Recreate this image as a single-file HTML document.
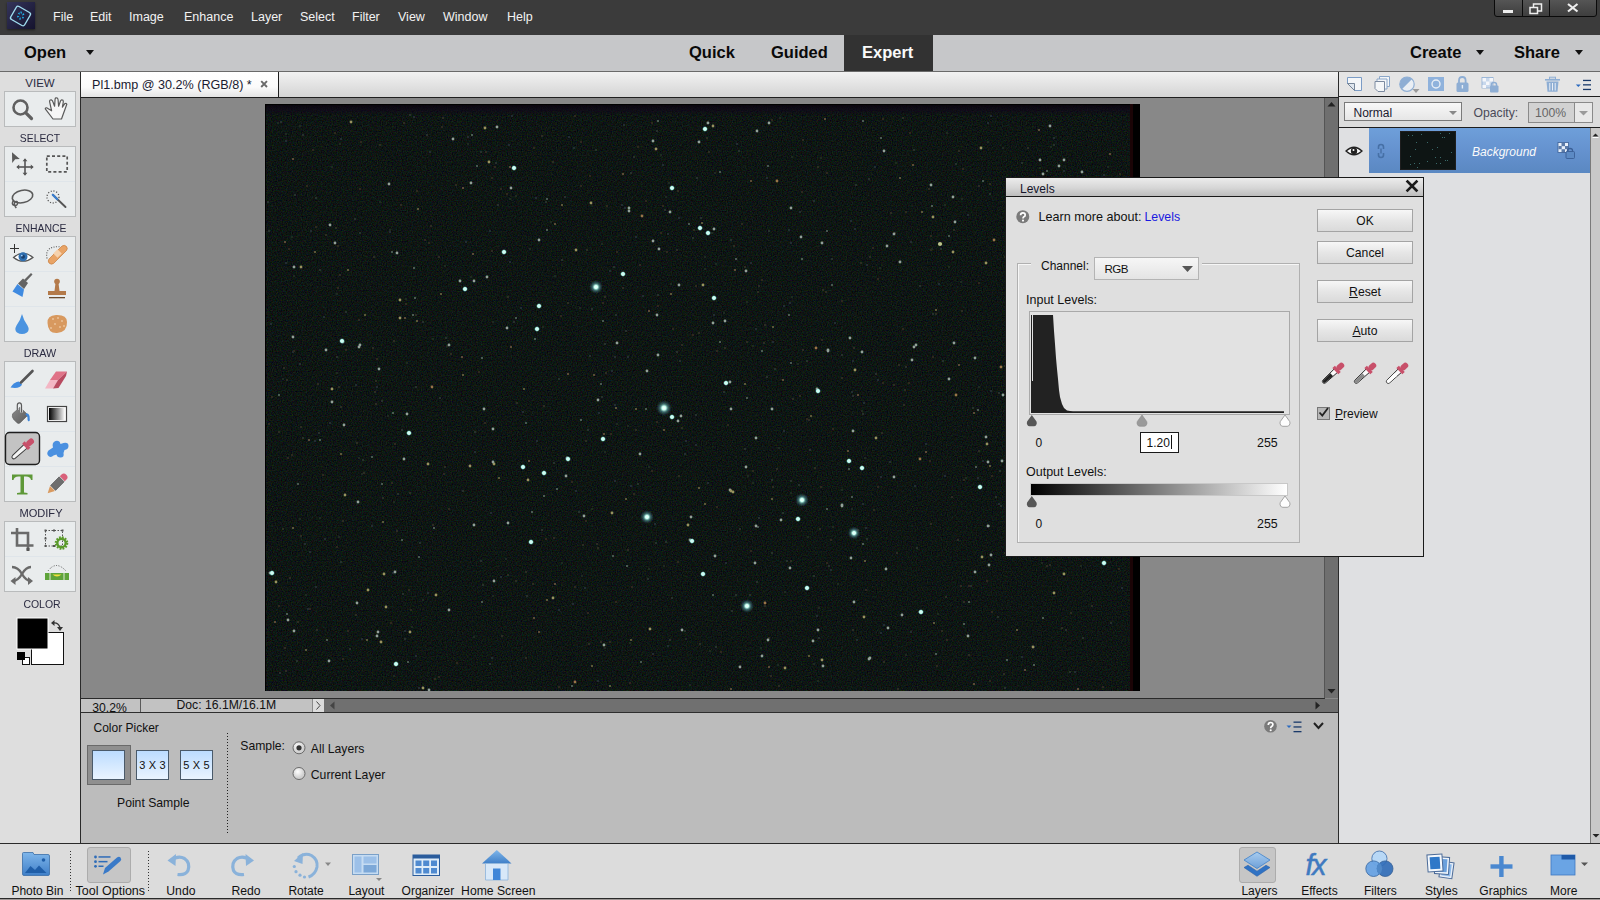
<!DOCTYPE html>
<html><head><meta charset="utf-8">
<style>
*{box-sizing:border-box;margin:0;padding:0}
html,body{width:1600px;height:900px;overflow:hidden;background:#888;font-family:"Liberation Sans",sans-serif;color:#111}
.a{position:absolute}
.t{position:absolute;white-space:nowrap;line-height:1}
svg{position:absolute;overflow:visible}
#menubar{left:0;top:0;width:1600px;height:35px;background:#3b3b3b}
.mi{position:absolute;top:11px;color:#f2f2f2;font-size:12.5px;line-height:1}
#modebar{left:0;top:35px;width:1600px;height:37px;background:#c6c7c9;border-bottom:1px solid #6a6a6a}
.mb{position:absolute;top:9px;font-size:16.5px;font-weight:bold;color:#0a0a0a;line-height:1}
.tl{position:absolute;left:0;width:80px;text-align:center;font-size:11.5px;color:#2a2a40;line-height:1}
.tbx{position:absolute;left:4px;width:72px;background:#e9eced;border:1px solid #b9bbbc}
#tabbar{left:81px;top:72px;width:1257px;height:26px;background:linear-gradient(#f2f2f2,#d4d4d4);border-bottom:1px solid #1e1e1e}
#tab{left:81px;top:72px;width:198px;height:25px;background:linear-gradient(#ffffff 0%,#fbfbfb 60%,#e4e4e4 100%);border-right:1px solid #1e1e1e}
#canvas{left:81px;top:98px;width:1244px;height:601px;background:#888888;border-bottom:1px solid #333}
#vscroll{left:1324px;top:98px;width:14px;height:600px;background:#6f6f6f;border-left:1px solid #555}
#status{left:81px;top:699px;width:1257px;height:14px;background:#707070;border-bottom:1px solid #555}
#options{left:81px;top:713px;width:1257px;height:130px;background:#bcbcbc}
#rpanel{left:1338px;top:72px;width:262px;height:771px;background:#dfe0e2;border-left:1px solid #4a4a4a}
#taskbar{left:0;top:843px;width:1600px;height:57px;background:#dcdcdc;border-top:1px solid #6a6a6a}
.tk{position:absolute;top:885px;font-size:12px;line-height:1;color:#111;white-space:nowrap}
#img{left:265px;top:104px;width:875px;height:587px;background:#000}
#dlg{left:1005px;top:177px;width:419px;height:380px;background:#dfdfdf;border:1px solid #1a1a1a}
</style></head><body>
<div id="menubar" class="a">
 <div class="a" style="left:7px;top:2px;width:28px;height:27px;background:linear-gradient(135deg,#34345a,#15132e);box-shadow:0 1px 2px rgba(0,0,0,.5)"></div>
 <svg width="28" height="27" style="left:7px;top:2px">
  <rect x="5.5" y="6.5" width="16" height="15" rx="2" fill="none" stroke="#9fdcef" stroke-width="1.4" transform="rotate(30 13.5 14)"/>
  <g fill="#1fb8f0"><path d="M13.2 9.5 L15 9.8 L14.2 12.5 Z"/><path d="M16.2 11 L17.5 12.8 L15 13.5 Z"/><path d="M17 15 L16 17 L14.8 14.8 Z"/><path d="M14 17.5 L12 17.5 L13.2 15 Z"/><path d="M10.5 15.8 L10 13.8 L12.5 14.3 Z"/><path d="M10.8 11.5 L12.5 10.2 L12.8 12.8 Z"/></g>
 </svg>
 <div class="a" style="left:1494px;top:-1px;width:103px;height:18px;border:1px solid #0a0a0a;border-radius:0 0 3px 3px;background:linear-gradient(#555,#3e3e3e)"></div>
 <div class="a" style="left:1522px;top:0;width:1px;height:17px;background:#0a0a0a"></div>
 <div class="a" style="left:1549px;top:0;width:1px;height:17px;background:#0a0a0a"></div>
 <div class="a" style="left:1503px;top:10px;width:10px;height:3px;background:#eee"></div>
 <svg width="14" height="12" style="left:1529px;top:3px"><rect x="4.5" y="1" width="8" height="7" fill="none" stroke="#eee" stroke-width="1.5"/><rect x="1" y="4.5" width="7.5" height="6" fill="#454545" stroke="#eee" stroke-width="1.5"/></svg>
 <svg width="12" height="10" style="left:1567px;top:3px"><path d="M1 1 L10.5 8.5 M10.5 1 L1 8.5" stroke="#eee" stroke-width="2.2"/></svg>
 <span class="mi" style="left:53px">File</span>
 <span class="mi" style="left:90px">Edit</span>
 <span class="mi" style="left:129px">Image</span>
 <span class="mi" style="left:184px">Enhance</span>
 <span class="mi" style="left:251px">Layer</span>
 <span class="mi" style="left:300px">Select</span>
 <span class="mi" style="left:352px">Filter</span>
 <span class="mi" style="left:398px">View</span>
 <span class="mi" style="left:443px">Window</span>
 <span class="mi" style="left:507px">Help</span>
</div>
<div id="modebar" class="a">
 <span class="mb" style="left:24px">Open</span>
 <div class="a" style="left:86px;top:15px;width:0;height:0;border-left:4px solid transparent;border-right:4px solid transparent;border-top:5px solid #111"></div>
 <span class="mb" style="left:689px">Quick</span>
 <span class="mb" style="left:771px">Guided</span>
 <div class="a" style="left:844px;top:0;width:89px;height:36px;background:#323232"></div>
 <span class="mb" style="left:862px;color:#fafafa">Expert</span>
 <span class="mb" style="left:1410px">Create</span>
 <div class="a" style="left:1476px;top:15px;width:0;height:0;border-left:4px solid transparent;border-right:4px solid transparent;border-top:5px solid #111"></div>
 <span class="mb" style="left:1514px">Share</span>
 <div class="a" style="left:1575px;top:15px;width:0;height:0;border-left:4px solid transparent;border-right:4px solid transparent;border-top:5px solid #111"></div>
</div>
<div id="tabbar" class="a"></div>
<div id="tab" class="a"></div>
<span class="t" style="left:92px;top:79px;font-size:12.6px;color:#1a1a30">Pl1.bmp @ 30.2% (RGB/8) *</span>
<svg width="9" height="9" style="left:260px;top:80px"><path d="M1.2 1.2 L7 7 M7 1.2 L1.2 7" stroke="#6a6a6a" stroke-width="1.9"/></svg>
<div id="canvas" class="a"></div>
<div id="vscroll" class="a"></div>
<div id="status" class="a"></div>
<div id="options" class="a"></div>
<div id="rpanel" class="a"></div>
<div id="taskbar" class="a"></div>
<div class="a" style="left:0;top:72px;width:80px;height:771px;background:#dedede"></div>
<div class="a" style="left:80px;top:72px;width:1px;height:771px;background:#2a2a2a"></div>
<span class="tl" style="top:78px">VIEW</span>
<span class="tl" style="top:133px;transform:scaleX(0.9)">SELECT</span>
<span class="tl" style="top:222.5px;left:0.5px;transform:scaleX(0.907)">ENHANCE</span>
<span class="tl" style="top:347.5px;transform:scaleX(0.94)">DRAW</span>
<span class="tl" style="top:507.5px;left:1px;transform:scaleX(0.964)">MODIFY</span>
<span class="tl" style="top:598.5px;left:2px;transform:scaleX(0.91)">COLOR</span>
<div class="tbx" style="top:91px;height:36px"></div>
<div class="tbx" style="top:146px;height:71px"></div>
<div class="tbx" style="top:236px;height:106px"></div>
<div class="tbx" style="top:361px;height:141px"></div>
<div class="tbx" style="top:521px;height:71px"></div>
<svg width="81" height="843" style="left:0;top:0">
 <g stroke="#dfe5ea" stroke-width="1">
  <line x1="5" y1="181.5" x2="75" y2="181.5"/>
  <line x1="5" y1="271.5" x2="75" y2="271.5"/><line x1="5" y1="306.5" x2="75" y2="306.5"/>
  <line x1="5" y1="396.5" x2="75" y2="396.5"/><line x1="5" y1="431.5" x2="75" y2="431.5"/><line x1="5" y1="466.5" x2="75" y2="466.5"/>
  <line x1="5" y1="556.5" x2="75" y2="556.5"/>
 </g>
 <!-- zoom -->
 <circle cx="20.5" cy="107.5" r="7" fill="none" stroke="#606060" stroke-width="2.6"/>
 <line x1="25.8" y1="112.8" x2="31.5" y2="118.5" stroke="#606060" stroke-width="3.2" stroke-linecap="round"/>
 <!-- hand -->
 <path d="M53 119 L45.5 109.2 Q44.8 107.6 46.6 107.8 L51.6 110.8 L49.6 101.6 Q49.6 99.6 51.3 99.9 Q52.5 100.3 53 102 L54.6 106.2 L55.1 99 Q55.6 97.3 57.2 98 Q58 98.6 58.1 100 L58.6 106.2 L60.6 100.8 Q61.6 99.2 63 100.2 Q63.5 101 63.2 102.5 L62.4 107.2 L64.6 103.8 Q66.2 102.6 66.8 104.3 L61.5 119 Z" fill="#f6f6f6" stroke="#5a5a5a" stroke-width="1.2" stroke-linejoin="round"/>
 <!-- move -->
 <path d="M12 152.3 L19.8 159 L15.2 159.3 L12.2 163 Z" fill="#5a5a5a"/>
 <g stroke="#555" stroke-width="1.6" fill="none"><line x1="17.5" y1="167" x2="32.5" y2="167"/><line x1="25" y1="159.5" x2="25" y2="174.5"/></g>
 <path d="M25 158.3 L22.6 161.2 L27.4 161.2 Z M25 175.7 L22.6 172.8 L27.4 172.8 Z M16.3 167 L19.2 164.6 L19.2 169.4 Z M33.7 167 L30.8 164.6 L30.8 169.4 Z" fill="#555"/>
 <!-- marquee -->
 <rect x="46.8" y="156.2" width="20.4" height="15.6" fill="none" stroke="#555" stroke-width="1.7" stroke-dasharray="3 2.2"/>
 <!-- lasso -->
 <ellipse cx="22.5" cy="196.5" rx="10.4" ry="6.2" fill="none" stroke="#5a5a5a" stroke-width="1.6" transform="rotate(-12 22.5 196.5)"/>
 <path d="M13.5 200.5 Q11 204.5 14 205.3 Q17.5 206 17.6 203 Q17.3 200.6 14.8 202 Q13.5 204.5 16.3 208" fill="none" stroke="#5a5a5a" stroke-width="1.5"/>
 <!-- magic wand -->
 <circle cx="53" cy="197" r="6" fill="none" stroke="#555" stroke-width="1.3" stroke-dasharray="1.1 1.7"/>
 <line x1="52.8" y1="194.8" x2="65.5" y2="207" stroke="#555" stroke-width="1.9" stroke-linecap="round"/>
 <line x1="52.8" y1="194.8" x2="57.2" y2="199.2" stroke="#3a7fd0" stroke-width="2.1" stroke-linecap="round"/>
 <!-- red eye -->
 <g stroke="#333" stroke-width="1"><line x1="10" y1="248.5" x2="19" y2="248.5"/><line x1="14.5" y1="244" x2="14.5" y2="253"/></g>
 <path d="M13.5 257.5 Q23 249 33 257.5 Q23 265 13.5 257.5 Z" fill="#fff" stroke="#555" stroke-width="1.2"/>
 <circle cx="23" cy="256.8" r="4.5" fill="#2f6fb0"/><circle cx="23" cy="256.8" r="2" fill="#1b3f6b"/><circle cx="21.8" cy="255.6" r="0.9" fill="#9fd0ff"/>
 <!-- healing -->
 <path d="M47 258.5 Q44.5 246 59.5 246.8" fill="none" stroke="#555" stroke-width="1.1" stroke-dasharray="1 1.5"/>
 <path d="M49 259 L62 246 Q64.5 244.5 66.5 246.5 Q68 248.5 66.5 250.5 L53.5 263.5 Q51 265 49 263 Q47.5 261 49 259 Z" fill="#e9a466" stroke="#c57c3e" stroke-width="0.7"/>
 <rect x="54.5" y="250.5" width="6" height="6" fill="#f6d2ad" transform="rotate(-45 57.5 253.5)"/>
 <!-- smart brush -->
 <path d="M12.5 291.5 L17.5 284 L24 289.5 L22.5 297 Z" fill="#3f8ae0"/>
 <path d="M18 283.5 L23 278.5 L28 283 L24 289 Z" fill="#636363"/>
 <path d="M24 280 L31 273 L32.5 274.5 L26 281.5 Z" fill="#636363"/>
 <!-- clone stamp -->
 <circle cx="57" cy="281.5" r="2.8" fill="#b47a4a"/>
 <path d="M55.5 283 L58.5 283 L59.5 291 L54.5 291 Z" fill="#b47a4a"/>
 <rect x="48" y="291" width="18" height="4" fill="#b47a4a"/>
 <rect x="49" y="297" width="16" height="1.3" fill="#6b4a2e"/>
 <!-- blur drop -->
 <path d="M22 314 Q23.5 320 27.5 325.5 Q30 330 27 332.5 Q22 335.5 17 332.5 Q14 330 16.5 325.5 Q20.5 320 22 314 Z" fill="#4a93e0"/>
 <!-- sponge -->
 <path d="M47.5 323 Q47 315.5 56 315 Q67 314.5 67 322 Q67.5 332 57 333 Q48 333.5 47.5 323 Z" fill="#d8995f"/>
 <g fill="#f7e0c5"><circle cx="53" cy="319" r="0.8"/><circle cx="58" cy="318" r="0.8"/><circle cx="62" cy="321" r="0.8"/><circle cx="55" cy="324" r="0.8"/><circle cx="60" cy="327" r="0.8"/><circle cx="51" cy="328" r="0.8"/><circle cx="64" cy="326" r="0.8"/></g>
 <!-- brush -->
 <path d="M10.5 387.5 Q14 382 19 381.5 L22 384.5 Q20 389 10.5 387.5 Z" fill="#3f8ae0"/>
 <line x1="21" y1="382.5" x2="32.5" y2="371" stroke="#555" stroke-width="2.6" stroke-linecap="round"/>
 <!-- eraser -->
 <path d="M45 388.5 L50 380 L58 380 L53 388.5 Z" fill="#f3b6c4"/>
 <path d="M50 380 L56 371.5 L67 371.5 L58 380 Z" fill="#e07388"/>
 <path d="M58 380 L67 371.5 L66 376 L58.5 388 L53 388.5 Z" fill="#b84a60"/>
 <!-- bucket -->
 <defs><linearGradient id="bk" x1="0" y1="0" x2="1" y2="1"><stop offset="0" stop-color="#8a8a8a"/><stop offset="1" stop-color="#5a5a5a"/></linearGradient></defs>
 <path d="M12.6 413.8 Q11.6 416.8 13.6 419.3 L17 422.8 Q18.6 424.2 20.2 422.8 L28 415 L20 407.2 Z" fill="url(#bk)" stroke="#555" stroke-width="0.6"/>
 <path d="M17.3 410 L17.3 405.2 Q17.5 402.9 19.4 402.9 Q21.3 402.9 21.5 405.2 L21.5 412.5" fill="none" stroke="#e9eced" stroke-width="2.6"/>
 <path d="M17.3 410 L17.3 405.2 Q17.5 402.9 19.4 402.9 Q21.3 402.9 21.5 405.2 L21.5 412.5" fill="none" stroke="#5a5a5a" stroke-width="1.2"/>
 <path d="M26.2 413.2 Q28.8 413 29.6 416.5 L29.8 420 Q29.6 421.7 28.3 421.2 Q27.2 420.4 27.5 417.4 Q27.2 415.3 25.4 414.8 Z" fill="#3f86d8"/>
 <!-- gradient -->
 <defs><linearGradient id="gr" x1="0" x2="1"><stop offset="0" stop-color="#000"/><stop offset="1" stop-color="#fff"/></linearGradient></defs>
 <rect x="47.5" y="406.5" width="19" height="15" fill="#fff" stroke="#444" stroke-width="1.2"/>
 <rect x="49" y="408" width="16" height="12" fill="url(#gr)"/>
 <!-- eyedropper selected -->
 <rect x="5.5" y="432.5" width="34" height="32" rx="4" fill="#c3c3c3" stroke="#1e1e1e" stroke-width="1.4"/>
 <g transform="translate(26.5 445.5) rotate(-42)">
  <path d="M-19 0 Q-19 -1.7 -17 -1.9 L0 -2.4 L0 2.4 L-17 1.9 Q-19 1.7 -19 0 Z" fill="#f4f4f4" stroke="#3a3a3a" stroke-width="1"/>
  <rect x="-2" y="-4.3" width="3.4" height="8.6" fill="#c8506a"/>
  <rect x="0.8" y="-2.9" width="8.2" height="5.8" rx="2.7" fill="#c8506a"/>
 </g>
 <!-- smudge splat -->
 <path d="M48.5 456 Q46 453.5 48.5 450.5 L53 447.5 Q51.5 442.5 55.5 441 Q59.5 440 60.5 444 L63.5 443 Q68.5 442 68.5 446 Q68.5 449.5 64.5 450 L63.5 453 Q64.5 457.5 60.5 457.5 Q57 457.5 56.5 454.5 L53.5 455.5 Q51 458 48.5 456 Z" fill="#4a90e0"/>
 <!-- T -->
 <path d="M12 474.5 L32.5 474.5 L32.5 480 L31 480 Q30.5 476.5 26 476.5 L24 476.5 L24 492.5 L27.5 493 L27.5 494.5 L17 494.5 L17 493 L20.5 492.5 L20.5 476.5 L18.5 476.5 Q14 476.5 13.5 480 L12 480 Z" fill="#5e9838"/>
 <!-- pencil -->
 <g transform="translate(56.6 484.4) rotate(-45) scale(1.1)">
  <rect x="-4.5" y="-3.2" width="11" height="6.4" fill="#6e6e6e" stroke="#4a4a4a" stroke-width="0.5"/>
  <path d="M7.3 -3.2 L9.5 -3.2 Q12.5 -3.2 12.5 0 Q12.5 3.2 9.5 3.2 L7.3 3.2 Z" fill="#d9607a"/>
  <path d="M-5.3 -3.2 L-5.3 3.2 L-11.5 0 Z" fill="#d99a60"/>
 </g>
 <!-- crop -->
 <g fill="none" stroke="#6a6a6a" stroke-width="2.6"><path d="M17 528 L17 545.5 L33.5 545.5"/><path d="M11 533 L28 533 L28 550"/></g>
 <rect x="26.5" y="548" width="3" height="3" fill="#555"/>
 <!-- recompose -->
 <rect x="45.5" y="530.5" width="17" height="15.5" fill="none" stroke="#555" stroke-width="1" stroke-dasharray="1.5 1.5"/>
 <g fill="#555"><rect x="44.5" y="529.5" width="2" height="2"/><rect x="53" y="529.5" width="2" height="2"/><rect x="61.5" y="529.5" width="2" height="2"/><rect x="44.5" y="537.5" width="2" height="2"/><rect x="44.5" y="545" width="2" height="2"/><rect x="53" y="545" width="2" height="2"/></g>
 <circle cx="61.5" cy="543" r="5.2" fill="none" stroke="#5a9a2a" stroke-width="3.2" stroke-dasharray="1.6 1.1"/>
 <circle cx="61.5" cy="543" r="4.2" fill="none" stroke="#5a9a2a" stroke-width="2.4"/>
 <!-- content move -->
 <g fill="none" stroke="#6a6a6a" stroke-width="2.4"><path d="M12 567 Q18 567 22 574 Q26 581 31 581"/><path d="M31 567 Q26 567 22 574 Q18 581 12.5 581"/></g>
 <path d="M10.5 581 L15.5 577 L15.5 585 Z M33 581 L28 577 L28 585 Z" fill="#6a6a6a"/>
 <!-- straighten -->
 <path d="M48 571 Q56 560 66 571" fill="none" stroke="#333" stroke-width="0.8" stroke-dasharray="1 1.5"/>
 <rect x="45" y="573" width="24" height="7" fill="#5ea33a"/>
 <rect x="49.5" y="573" width="1" height="7" fill="#dfe8d8"/><rect x="63.5" y="573" width="1" height="7" fill="#dfe8d8"/>
 <path d="M52.5 574.5 Q57 578.5 61.5 574.5 Z" fill="#f2e03a"/>
 <!-- color swatches -->
 <rect x="31.5" y="632.5" width="32" height="32" fill="#fff" stroke="#111" stroke-width="1"/>
 <rect x="17" y="618" width="31" height="31" fill="#000" stroke="#fff" stroke-width="1"/>
 <rect x="22.5" y="657.5" width="7" height="7" fill="#fff" stroke="#111" stroke-width="1"/>
 <rect x="17" y="652" width="8" height="8" fill="#000"/>
 <path d="M53 623 Q58 622 60 627.5" fill="none" stroke="#333" stroke-width="1.3"/>
 <path d="M51 623 L54.5 620 L54.5 626 Z M60 631 L57 627 L63 627 Z" fill="#333"/>
</svg>
<svg width="875" height="587" style="left:265px;top:104px">
<defs><radialGradient id="glow"><stop offset="0" stop-color="#ffffff"/><stop offset="0.25" stop-color="#c8fff0"/><stop offset="0.5" stop-color="#5fa8a8" stop-opacity="0.6"/><stop offset="1" stop-color="#2a4a6a" stop-opacity="0"/></radialGradient>
<radialGradient id="mid"><stop offset="0" stop-color="#f4fffb"/><stop offset="0.55" stop-color="#aef0e4"/><stop offset="1" stop-color="#3a7070" stop-opacity="0"/></radialGradient></defs>
<rect width="875" height="587" fill="#000"/>
<filter id="nz" x="0" y="0" width="100%" height="100%" color-interpolation-filters="sRGB"><feTurbulence type="fractalNoise" baseFrequency="0.8" numOctaves="2" seed="5"/><feColorMatrix type="matrix" values="0.22 0 0 0 -0.055  0 0.26 0 0 -0.045  0 0 0.24 0 -0.045  0 0 0 0 1"/></filter>
<rect x="0" y="0" width="865" height="587" fill="#0e1613"/>
<rect x="0" y="0" width="865" height="587" filter="url(#nz)"/>
<linearGradient id="band" x1="0" y1="0" x2="0" y2="1"><stop offset="0" stop-color="#08020a" stop-opacity="0.9"/><stop offset="0.6" stop-color="#10061a" stop-opacity="0.55"/><stop offset="1" stop-color="#10061a" stop-opacity="0"/></linearGradient>
<rect x="0" y="0" width="865" height="11" fill="url(#band)"/>
<rect x="0" y="0" width="875" height="1" fill="#000"/>
<rect x="0" y="0" width="1" height="587" fill="#000"/>
<rect x="865" y="0" width="3" height="587" fill="#1a0406"/>
<rect x="280" y="97" width="2" height="2" fill="#26302c"/>
<rect x="64" y="318" width="2" height="2" fill="#222c32"/>
<rect x="503" y="533" width="2" height="2" fill="#2c2c22"/>
<rect x="34" y="259" width="2" height="2" fill="#26302c"/>
<rect x="209" y="327" width="2" height="2" fill="#26302c"/>
<rect x="713" y="81" width="2" height="2" fill="#2c2c22"/>
<rect x="544" y="345" width="2" height="2" fill="#26302c"/>
<rect x="498" y="238" width="2" height="2" fill="#2c2c22"/>
<rect x="42" y="504" width="2" height="2" fill="#222c32"/>
<rect x="362" y="321" width="2" height="2" fill="#1e2a20"/>
<rect x="267" y="479" width="2" height="2" fill="#2c2c22"/>
<rect x="91" y="338" width="2" height="2" fill="#2c2c22"/>
<rect x="322" y="325" width="2" height="2" fill="#26302c"/>
<rect x="487" y="366" width="2" height="2" fill="#2e281e"/>
<rect x="587" y="256" width="2" height="2" fill="#222c32"/>
<rect x="402" y="541" width="2" height="2" fill="#222c32"/>
<rect x="260" y="467" width="2" height="2" fill="#2c2c22"/>
<rect x="72" y="183" width="2" height="2" fill="#2e281e"/>
<rect x="755" y="429" width="2" height="2" fill="#222c32"/>
<rect x="526" y="52" width="2" height="2" fill="#1e2a20"/>
<rect x="362" y="445" width="2" height="2" fill="#2c2c22"/>
<rect x="805" y="252" width="2" height="2" fill="#26302c"/>
<rect x="660" y="339" width="2" height="2" fill="#222c32"/>
<rect x="295" y="211" width="2" height="2" fill="#2e281e"/>
<rect x="501" y="272" width="2" height="2" fill="#26302c"/>
<rect x="814" y="283" width="2" height="2" fill="#26302c"/>
<rect x="54" y="413" width="2" height="2" fill="#1e2a20"/>
<rect x="856" y="483" width="2" height="2" fill="#222c32"/>
<rect x="618" y="520" width="2" height="2" fill="#222c32"/>
<rect x="21" y="275" width="2" height="2" fill="#2c2c22"/>
<rect x="527" y="294" width="2" height="2" fill="#2c2c22"/>
<rect x="663" y="84" width="2" height="2" fill="#2c2c22"/>
<rect x="344" y="537" width="2" height="2" fill="#2e281e"/>
<rect x="71" y="268" width="2" height="2" fill="#1e2a20"/>
<rect x="241" y="89" width="2" height="2" fill="#2e281e"/>
<rect x="745" y="170" width="2" height="2" fill="#2e281e"/>
<rect x="850" y="403" width="2" height="2" fill="#2e281e"/>
<rect x="826" y="97" width="2" height="2" fill="#2c2c22"/>
<rect x="132" y="389" width="2" height="2" fill="#26302c"/>
<rect x="419" y="349" width="2" height="2" fill="#222c32"/>
<rect x="244" y="94" width="2" height="2" fill="#1e2a20"/>
<rect x="320" y="336" width="2" height="2" fill="#2c2c22"/>
<rect x="596" y="306" width="2" height="2" fill="#1e2a20"/>
<rect x="565" y="435" width="2" height="2" fill="#2e281e"/>
<rect x="776" y="458" width="2" height="2" fill="#1e2a20"/>
<rect x="339" y="239" width="2" height="2" fill="#26302c"/>
<rect x="416" y="240" width="2" height="2" fill="#2c2c22"/>
<rect x="60" y="130" width="2" height="2" fill="#2c2c22"/>
<rect x="97" y="355" width="2" height="2" fill="#26302c"/>
<rect x="2" y="97" width="2" height="2" fill="#26302c"/>
<rect x="818" y="363" width="2" height="2" fill="#26302c"/>
<rect x="754" y="363" width="2" height="2" fill="#2c2c22"/>
<rect x="548" y="559" width="2" height="2" fill="#1e2a20"/>
<rect x="315" y="81" width="2" height="2" fill="#2e281e"/>
<rect x="856" y="278" width="2" height="2" fill="#2e281e"/>
<rect x="270" y="93" width="2" height="2" fill="#222c32"/>
<rect x="639" y="285" width="2" height="2" fill="#2c2c22"/>
<rect x="446" y="128" width="2" height="2" fill="#1e2a20"/>
<rect x="313" y="407" width="2" height="2" fill="#26302c"/>
<rect x="654" y="181" width="2" height="2" fill="#26302c"/>
<rect x="601" y="160" width="2" height="2" fill="#222c32"/>
<rect x="783" y="215" width="2" height="2" fill="#2c2c22"/>
<rect x="460" y="458" width="2" height="2" fill="#222c32"/>
<rect x="549" y="363" width="2" height="2" fill="#2c2c22"/>
<rect x="695" y="481" width="2" height="2" fill="#2c2c22"/>
<rect x="174" y="293" width="2" height="2" fill="#26302c"/>
<rect x="853" y="464" width="2" height="2" fill="#2e281e"/>
<rect x="225" y="408" width="2" height="2" fill="#222c32"/>
<rect x="387" y="549" width="2" height="2" fill="#222c32"/>
<rect x="823" y="220" width="2" height="2" fill="#2c2c22"/>
<rect x="90" y="280" width="2" height="2" fill="#222c32"/>
<rect x="178" y="369" width="2" height="2" fill="#1e2a20"/>
<rect x="725" y="286" width="2" height="2" fill="#222c32"/>
<rect x="690" y="59" width="2" height="2" fill="#26302c"/>
<rect x="784" y="460" width="2" height="2" fill="#2c2c22"/>
<rect x="413" y="113" width="2" height="2" fill="#222c32"/>
<rect x="77" y="554" width="2" height="2" fill="#2e281e"/>
<rect x="400" y="437" width="2" height="2" fill="#26302c"/>
<rect x="625" y="108" width="2" height="2" fill="#2c2c22"/>
<rect x="26" y="350" width="2" height="2" fill="#2e281e"/>
<rect x="696" y="94" width="2" height="2" fill="#1e2a20"/>
<rect x="845" y="388" width="2" height="2" fill="#222c32"/>
<rect x="136" y="325" width="2" height="2" fill="#26302c"/>
<rect x="14" y="568" width="2" height="2" fill="#26302c"/>
<rect x="455" y="547" width="2" height="2" fill="#2e281e"/>
<rect x="850" y="122" width="2" height="2" fill="#2c2c22"/>
<rect x="26" y="132" width="2" height="2" fill="#1e2a20"/>
<rect x="209" y="347" width="2" height="2" fill="#222c32"/>
<rect x="470" y="490" width="2" height="2" fill="#26302c"/>
<rect x="785" y="213" width="2" height="2" fill="#2e281e"/>
<rect x="572" y="479" width="2" height="2" fill="#1e2a20"/>
<rect x="364" y="538" width="2" height="2" fill="#1e2a20"/>
<rect x="114" y="97" width="2" height="2" fill="#1e2a20"/>
<rect x="18" y="263" width="2" height="2" fill="#2c2c22"/>
<rect x="525" y="456" width="2" height="2" fill="#2c2c22"/>
<rect x="150" y="282" width="2" height="2" fill="#26302c"/>
<rect x="481" y="197" width="2" height="2" fill="#1e2a20"/>
<rect x="458" y="287" width="2" height="2" fill="#26302c"/>
<rect x="762" y="43" width="2" height="2" fill="#2c2c22"/>
<rect x="240" y="454" width="2" height="2" fill="#1e2a20"/>
<rect x="391" y="26" width="2" height="2" fill="#26302c"/>
<rect x="383" y="362" width="2" height="2" fill="#1e2a20"/>
<rect x="523" y="125" width="2" height="2" fill="#222c32"/>
<rect x="391" y="317" width="2" height="2" fill="#2e281e"/>
<rect x="439" y="152" width="2" height="2" fill="#1e2a20"/>
<rect x="756" y="552" width="2" height="2" fill="#222c32"/>
<rect x="796" y="523" width="2" height="2" fill="#2c2c22"/>
<rect x="724" y="89" width="2" height="2" fill="#26302c"/>
<rect x="339" y="192" width="2" height="2" fill="#2c2c22"/>
<rect x="370" y="132" width="2" height="2" fill="#222c32"/>
<rect x="676" y="526" width="2" height="2" fill="#2c2c22"/>
<rect x="810" y="380" width="2" height="2" fill="#222c32"/>
<rect x="125" y="518" width="2" height="2" fill="#2e281e"/>
<rect x="191" y="558" width="2" height="2" fill="#2e281e"/>
<rect x="763" y="104" width="2" height="2" fill="#2c2c22"/>
<rect x="141" y="258" width="2" height="2" fill="#1e2a20"/>
<rect x="349" y="252" width="2" height="2" fill="#222c32"/>
<rect x="276" y="425" width="2" height="2" fill="#26302c"/>
<rect x="293" y="274" width="2" height="2" fill="#26302c"/>
<rect x="333" y="308" width="2" height="2" fill="#222c32"/>
<rect x="443" y="47" width="2" height="2" fill="#2c2c22"/>
<rect x="838" y="70" width="2" height="2" fill="#222c32"/>
<rect x="236" y="531" width="2" height="2" fill="#2c2c22"/>
<rect x="235" y="84" width="2" height="2" fill="#2e281e"/>
<rect x="733" y="399" width="2" height="2" fill="#222c32"/>
<rect x="351" y="319" width="2" height="2" fill="#1e2a20"/>
<rect x="493" y="413" width="2" height="2" fill="#26302c"/>
<rect x="242" y="470" width="2" height="2" fill="#2c2c22"/>
<rect x="368" y="52" width="2" height="2" fill="#26302c"/>
<rect x="548" y="471" width="2" height="2" fill="#26302c"/>
<rect x="525" y="138" width="2" height="2" fill="#222c32"/>
<rect x="744" y="271" width="2" height="2" fill="#222c32"/>
<rect x="857" y="250" width="2" height="2" fill="#222c32"/>
<rect x="537" y="35" width="2" height="2" fill="#2c2c22"/>
<rect x="809" y="567" width="2" height="2" fill="#222c32"/>
<rect x="45" y="126" width="2" height="2" fill="#222c32"/>
<rect x="543" y="315" width="2" height="2" fill="#2c2c22"/>
<rect x="251" y="298" width="2" height="2" fill="#2c2c22"/>
<rect x="235" y="472" width="2" height="2" fill="#222c32"/>
<rect x="34" y="21" width="2" height="2" fill="#1e2a20"/>
<rect x="476" y="119" width="2" height="2" fill="#2e281e"/>
<rect x="213" y="267" width="2" height="2" fill="#2e281e"/>
<rect x="567" y="324" width="2" height="2" fill="#2e281e"/>
<rect x="836" y="187" width="2" height="2" fill="#2c2c22"/>
<rect x="847" y="207" width="2" height="2" fill="#2c2c22"/>
<rect x="350" y="210" width="2" height="2" fill="#26302c"/>
<rect x="722" y="18" width="2" height="2" fill="#222c32"/>
<rect x="372" y="42" width="2" height="2" fill="#2e281e"/>
<rect x="751" y="396" width="2" height="2" fill="#222c32"/>
<rect x="517" y="408" width="2" height="2" fill="#26302c"/>
<rect x="397" y="101" width="2" height="2" fill="#2e281e"/>
<rect x="5" y="219" width="2" height="2" fill="#222c32"/>
<rect x="838" y="325" width="2" height="2" fill="#2c2c22"/>
<rect x="32" y="517" width="2" height="2" fill="#2c2c22"/>
<rect x="309" y="11" width="2" height="2" fill="#2e281e"/>
<rect x="74" y="170" width="2" height="2" fill="#2c2c22"/>
<rect x="215" y="456" width="2" height="2" fill="#26302c"/>
<rect x="229" y="62" width="2" height="2" fill="#2e281e"/>
<rect x="507" y="237" width="2" height="2" fill="#222c32"/>
<rect x="264" y="144" width="2" height="2" fill="#1e2a20"/>
<rect x="826" y="501" width="2" height="2" fill="#2c2c22"/>
<rect x="567" y="422" width="2" height="2" fill="#1e2a20"/>
<rect x="337" y="198" width="2" height="2" fill="#2e281e"/>
<rect x="131" y="426" width="2" height="2" fill="#2c2c22"/>
<rect x="40" y="490" width="2" height="2" fill="#1e2a20"/>
<rect x="542" y="432" width="2" height="2" fill="#1e2a20"/>
<rect x="122" y="311" width="2" height="2" fill="#1e2a20"/>
<rect x="491" y="477" width="2" height="2" fill="#26302c"/>
<rect x="713" y="346" width="2" height="2" fill="#2c2c22"/>
<rect x="75" y="34" width="2" height="2" fill="#222c32"/>
<rect x="827" y="227" width="2" height="2" fill="#2e281e"/>
<rect x="482" y="371" width="2" height="2" fill="#1e2a20"/>
<rect x="587" y="291" width="2" height="2" fill="#26302c"/>
<rect x="395" y="50" width="2" height="2" fill="#1e2a20"/>
<rect x="774" y="63" width="2" height="2" fill="#1e2a20"/>
<rect x="59" y="434" width="2" height="2" fill="#222c32"/>
<rect x="698" y="497" width="2" height="2" fill="#2c2c22"/>
<rect x="629" y="128" width="2" height="2" fill="#2e281e"/>
<rect x="427" y="230" width="2" height="2" fill="#2e281e"/>
<rect x="785" y="175" width="2" height="2" fill="#26302c"/>
<rect x="533" y="380" width="2" height="2" fill="#26302c"/>
<rect x="518" y="201" width="2" height="2" fill="#222c32"/>
<rect x="536" y="87" width="2" height="2" fill="#2e281e"/>
<rect x="54" y="165" width="2" height="2" fill="#26302c"/>
<rect x="597" y="399" width="2" height="2" fill="#222c32"/>
<rect x="612" y="174" width="2" height="2" fill="#2e281e"/>
<rect x="403" y="78" width="2" height="2" fill="#1e2a20"/>
<rect x="173" y="572" width="2" height="2" fill="#2e281e"/>
<rect x="17" y="274" width="2" height="2" fill="#1e2a20"/>
<rect x="835" y="268" width="2" height="2" fill="#222c32"/>
<rect x="335" y="537" width="2" height="2" fill="#2c2c22"/>
<rect x="66" y="62" width="2" height="2" fill="#1e2a20"/>
<rect x="227" y="217" width="2" height="2" fill="#1e2a20"/>
<rect x="707" y="303" width="2" height="2" fill="#26302c"/>
<rect x="607" y="143" width="2" height="2" fill="#2e281e"/>
<rect x="341" y="101" width="2" height="2" fill="#2e281e"/>
<rect x="588" y="243" width="2" height="2" fill="#2c2c22"/>
<rect x="360" y="226" width="2" height="2" fill="#26302c"/>
<rect x="725" y="11" width="2" height="2" fill="#222c32"/>
<rect x="724" y="79" width="2" height="2" fill="#2c2c22"/>
<rect x="615" y="528" width="2" height="2" fill="#222c32"/>
<rect x="220" y="47" width="2" height="2" fill="#2e281e"/>
<rect x="861" y="349" width="2" height="2" fill="#222c32"/>
<rect x="798" y="445" width="2" height="2" fill="#26302c"/>
<rect x="243" y="40" width="2" height="2" fill="#222c32"/>
<rect x="548" y="96" width="2" height="2" fill="#222c32"/>
<rect x="377" y="191" width="2" height="2" fill="#222c32"/>
<rect x="677" y="256" width="2" height="2" fill="#26302c"/>
<rect x="700" y="373" width="2" height="2" fill="#1e2a20"/>
<rect x="474" y="424" width="2" height="2" fill="#26302c"/>
<rect x="805" y="246" width="2" height="2" fill="#1e2a20"/>
<rect x="649" y="381" width="2" height="2" fill="#222c32"/>
<rect x="420" y="534" width="2" height="2" fill="#1e2a20"/>
<rect x="111" y="282" width="2" height="2" fill="#222c32"/>
<rect x="244" y="157" width="2" height="2" fill="#222c32"/>
<rect x="351" y="147" width="2" height="2" fill="#2e281e"/>
<rect x="481" y="237" width="2" height="2" fill="#2c2c22"/>
<rect x="555" y="53" width="2" height="2" fill="#1e2a20"/>
<rect x="781" y="296" width="2" height="2" fill="#2c2c22"/>
<rect x="392" y="201" width="2" height="2" fill="#2e281e"/>
<rect x="370" y="325" width="2" height="2" fill="#2c2c22"/>
<rect x="80" y="207" width="2" height="2" fill="#26302c"/>
<rect x="277" y="222" width="2" height="2" fill="#1e2a20"/>
<rect x="176" y="22" width="2" height="2" fill="#2e281e"/>
<rect x="331" y="439" width="2" height="2" fill="#2c2c22"/>
<rect x="326" y="204" width="2" height="2" fill="#26302c"/>
<rect x="430" y="340" width="2" height="2" fill="#222c32"/>
<rect x="110" y="299" width="2" height="2" fill="#2c2c22"/>
<rect x="82" y="526" width="2" height="2" fill="#2e281e"/>
<rect x="346" y="266" width="2" height="2" fill="#222c32"/>
<rect x="732" y="512" width="2" height="2" fill="#26302c"/>
<rect x="111" y="254" width="2" height="2" fill="#2e281e"/>
<rect x="835" y="292" width="2" height="2" fill="#26302c"/>
<rect x="339" y="543" width="2" height="2" fill="#1e2a20"/>
<rect x="738" y="569" width="2" height="2" fill="#2c2c22"/>
<rect x="675" y="139" width="2" height="2" fill="#2c2c22"/>
<rect x="451" y="402" width="2" height="2" fill="#2e281e"/>
<rect x="75" y="457" width="2" height="2" fill="#26302c"/>
<rect x="675" y="144" width="2" height="2" fill="#26302c"/>
<rect x="557" y="185" width="2" height="2" fill="#2c2c22"/>
<rect x="541" y="314" width="2" height="2" fill="#2e281e"/>
<rect x="603" y="74" width="2" height="2" fill="#26302c"/>
<rect x="260" y="553" width="2" height="2" fill="#2c2c22"/>
<rect x="336" y="139" width="2" height="2" fill="#1e2a20"/>
<rect x="3" y="319" width="2" height="2" fill="#2e281e"/>
<rect x="242" y="192" width="2" height="2" fill="#2c2c22"/>
<rect x="411" y="145" width="2" height="2" fill="#2c2c22"/>
<rect x="27" y="247" width="2" height="2" fill="#222c32"/>
<rect x="50" y="122" width="2" height="2" fill="#2e281e"/>
<rect x="72" y="141" width="2" height="2" fill="#2e281e"/>
<rect x="798" y="140" width="2" height="2" fill="#26302c"/>
<rect x="600" y="423" width="2" height="2" fill="#222c32"/>
<rect x="589" y="124" width="2" height="2" fill="#222c32"/>
<rect x="638" y="300" width="2" height="2" fill="#2c2c22"/>
<rect x="428" y="125" width="2" height="2" fill="#2c2c22"/>
<rect x="200" y="137" width="2" height="2" fill="#222c32"/>
<rect x="96" y="369" width="2" height="2" fill="#1e2a20"/>
<rect x="163" y="138" width="2" height="2" fill="#2e281e"/>
<rect x="785" y="42" width="2" height="2" fill="#1e2a20"/>
<rect x="128" y="236" width="2" height="2" fill="#2c2c22"/>
<rect x="22" y="353" width="2" height="2" fill="#2e281e"/>
<rect x="47" y="45" width="2" height="2" fill="#2e281e"/>
<rect x="389" y="419" width="2" height="2" fill="#222c32"/>
<rect x="632" y="584" width="2" height="2" fill="#2c2c22"/>
<rect x="285" y="117" width="2" height="2" fill="#1e2a20"/>
<rect x="644" y="28" width="2" height="2" fill="#2e281e"/>
<rect x="724" y="576" width="2" height="2" fill="#2e281e"/>
<rect x="148" y="12" width="2" height="2" fill="#222c32"/>
<rect x="71" y="252" width="2" height="2" fill="#26302c"/>
<rect x="485" y="446" width="2" height="2" fill="#2e281e"/>
<rect x="309" y="482" width="2" height="2" fill="#2e281e"/>
<rect x="77" y="416" width="2" height="2" fill="#2c2c22"/>
<rect x="323" y="539" width="2" height="2" fill="#2c2c22"/>
<rect x="280" y="434" width="2" height="2" fill="#2e281e"/>
<rect x="28" y="246" width="2" height="2" fill="#2e281e"/>
<rect x="37" y="30" width="2" height="2" fill="#26302c"/>
<rect x="693" y="46" width="2" height="2" fill="#2c2c22"/>
<rect x="645" y="527" width="2" height="2" fill="#222c32"/>
<rect x="314" y="203" width="2" height="2" fill="#1e2a20"/>
<rect x="39" y="439" width="2" height="2" fill="#222c32"/>
<rect x="797" y="181" width="2" height="2" fill="#1e2a20"/>
<rect x="790" y="375" width="2" height="2" fill="#26302c"/>
<rect x="23" y="144" width="2" height="2" fill="#2e281e"/>
<rect x="617" y="278" width="2" height="2" fill="#2e281e"/>
<rect x="681" y="535" width="2" height="2" fill="#2e281e"/>
<rect x="116" y="296" width="2" height="2" fill="#26302c"/>
<rect x="692" y="435" width="2" height="2" fill="#2c2c22"/>
<rect x="524" y="198" width="2" height="2" fill="#222c32"/>
<rect x="398" y="461" width="2" height="2" fill="#1e2a20"/>
<rect x="70" y="123" width="2" height="2" fill="#2c2c22"/>
<rect x="215" y="47" width="2" height="2" fill="#26302c"/>
<rect x="416" y="323" width="2" height="2" fill="#2c2c22"/>
<rect x="845" y="518" width="2" height="2" fill="#26302c"/>
<rect x="230" y="58" width="2" height="2" fill="#26302c"/>
<rect x="364" y="578" width="2" height="2" fill="#2e281e"/>
<rect x="151" y="86" width="2" height="2" fill="#2e281e"/>
<rect x="535" y="398" width="2" height="2" fill="#1e2a20"/>
<rect x="730" y="392" width="2" height="2" fill="#26302c"/>
<rect x="673" y="179" width="2" height="2" fill="#222c32"/>
<rect x="490" y="224" width="2" height="2" fill="#222c32"/>
<rect x="173" y="152" width="2" height="2" fill="#2c2c22"/>
<rect x="205" y="172" width="2" height="2" fill="#1e2a20"/>
<rect x="164" y="47" width="2" height="2" fill="#222c32"/>
<rect x="856" y="302" width="2" height="2" fill="#2c2c22"/>
<rect x="561" y="68" width="2" height="2" fill="#2e281e"/>
<rect x="854" y="69" width="2" height="2" fill="#2e281e"/>
<rect x="761" y="143" width="2" height="2" fill="#2e281e"/>
<rect x="788" y="33" width="2" height="2" fill="#222c32"/>
<rect x="202" y="39" width="2" height="2" fill="#1e2a20"/>
<rect x="839" y="345" width="2" height="2" fill="#26302c"/>
<rect x="322" y="508" width="2" height="2" fill="#2e281e"/>
<rect x="521" y="456" width="2" height="2" fill="#26302c"/>
<rect x="93" y="353" width="2" height="2" fill="#1e2a20"/>
<rect x="303" y="32" width="2" height="2" fill="#222c32"/>
<rect x="124" y="127" width="2" height="2" fill="#222c32"/>
<rect x="35" y="431" width="2" height="2" fill="#2c2c22"/>
<rect x="703" y="481" width="2" height="2" fill="#2e281e"/>
<rect x="585" y="116" width="2" height="2" fill="#222c32"/>
<rect x="69" y="28" width="2" height="2" fill="#2e281e"/>
<rect x="473" y="46" width="2" height="2" fill="#26302c"/>
<rect x="686" y="392" width="2" height="2" fill="#2c2c22"/>
<rect x="552" y="62" width="2" height="2" fill="#2c2c22"/>
<rect x="344" y="166" width="2" height="2" fill="#222c32"/>
<rect x="576" y="250" width="2" height="2" fill="#26302c"/>
<rect x="271" y="336" width="2" height="2" fill="#222c32"/>
<rect x="358" y="20" width="2" height="2" fill="#222c32"/>
<rect x="556" y="235" width="2" height="2" fill="#2e281e"/>
<rect x="177" y="13" width="2" height="2" fill="#2c2c22"/>
<rect x="366" y="482" width="2" height="2" fill="#2e281e"/>
<rect x="499" y="220" width="2" height="2" fill="#2c2c22"/>
<rect x="114" y="40" width="2" height="2" fill="#2c2c22"/>
<rect x="553" y="533" width="2" height="2" fill="#26302c"/>
<rect x="495" y="543" width="2" height="2" fill="#1e2a20"/>
<rect x="150" y="210" width="2" height="2" fill="#2c2c22"/>
<rect x="450" y="542" width="2" height="2" fill="#26302c"/>
<rect x="332" y="443" width="2" height="2" fill="#2c2c22"/>
<rect x="261" y="491" width="2" height="2" fill="#26302c"/>
<rect x="841" y="288" width="2" height="2" fill="#26302c"/>
<rect x="525" y="376" width="2" height="2" fill="#26302c"/>
<rect x="780" y="367" width="2" height="2" fill="#2c2c22"/>
<rect x="553" y="503" width="2" height="2" fill="#1e2a20"/>
<rect x="350" y="497" width="2" height="2" fill="#2e281e"/>
<rect x="159" y="135" width="2" height="2" fill="#2e281e"/>
<rect x="809" y="100" width="2" height="2" fill="#222c32"/>
<rect x="108" y="152" width="2" height="2" fill="#2c2c22"/>
<rect x="37" y="333" width="2" height="2" fill="#26302c"/>
<rect x="576" y="196" width="2" height="2" fill="#2e281e"/>
<rect x="518" y="326" width="2" height="2" fill="#222c32"/>
<rect x="560" y="187" width="2" height="2" fill="#2c2c22"/>
<rect x="368" y="389" width="2" height="2" fill="#2e281e"/>
<rect x="435" y="113" width="2" height="2" fill="#26302c"/>
<rect x="534" y="291" width="2" height="2" fill="#2c2c22"/>
<rect x="386" y="366" width="2" height="2" fill="#2e281e"/>
<rect x="721" y="476" width="2" height="2" fill="#2e281e"/>
<rect x="94" y="84" width="2" height="2" fill="#2e281e"/>
<rect x="316" y="471" width="2" height="2" fill="#1e2a20"/>
<rect x="441" y="33" width="2" height="2" fill="#2c2c22"/>
<rect x="73" y="432" width="2" height="2" fill="#1e2a20"/>
<rect x="71" y="442" width="2" height="2" fill="#2e281e"/>
<rect x="563" y="461" width="2" height="2" fill="#26302c"/>
<rect x="739" y="583" width="2" height="2" fill="#26302c"/>
<rect x="169" y="574" width="2" height="2" fill="#2e281e"/>
<rect x="250" y="476" width="2" height="2" fill="#2c2c22"/>
<rect x="592" y="425" width="2" height="2" fill="#2c2c22"/>
<rect x="58" y="212" width="2" height="2" fill="#222c32"/>
<rect x="139" y="526" width="2" height="2" fill="#222c32"/>
<rect x="780" y="272" width="2" height="2" fill="#222c32"/>
<rect x="434" y="539" width="2" height="2" fill="#2c2c22"/>
<rect x="511" y="364" width="2" height="2" fill="#2c2c22"/>
<rect x="276" y="31" width="2" height="2" fill="#2c2c22"/>
<rect x="349" y="376" width="2" height="2" fill="#222c32"/>
<rect x="587" y="525" width="2" height="2" fill="#2c2c22"/>
<rect x="683" y="162" width="2" height="2" fill="#1e2a20"/>
<rect x="44" y="504" width="2" height="2" fill="#2e281e"/>
<rect x="479" y="344" width="2" height="2" fill="#26302c"/>
<rect x="219" y="318" width="2" height="2" fill="#2e281e"/>
<rect x="637" y="224" width="2" height="2" fill="#2e281e"/>
<rect x="854" y="342" width="2" height="2" fill="#222c32"/>
<rect x="287" y="57" width="2" height="2" fill="#2c2c22"/>
<rect x="154" y="438" width="2" height="2" fill="#26302c"/>
<rect x="257" y="307" width="2" height="2" fill="#222c32"/>
<rect x="552" y="576" width="2" height="2" fill="#1e2a20"/>
<rect x="800" y="525" width="2" height="2" fill="#26302c"/>
<rect x="645" y="137" width="2" height="2" fill="#222c32"/>
<rect x="532" y="259" width="2" height="2" fill="#1e2a20"/>
<rect x="315" y="37" width="2" height="2" fill="#2e281e"/>
<rect x="197" y="386" width="2" height="2" fill="#26302c"/>
<rect x="49" y="336" width="2" height="2" fill="#222c32"/>
<rect x="93" y="215" width="2" height="2" fill="#2c2c22"/>
<rect x="357" y="183" width="2" height="2" fill="#2c2c22"/>
<rect x="178" y="369" width="2" height="2" fill="#2e281e"/>
<rect x="138" y="18" width="2" height="2" fill="#2c2c22"/>
<rect x="610" y="269" width="2" height="2" fill="#26302c"/>
<rect x="551" y="511" width="2" height="2" fill="#222c32"/>
<rect x="348" y="162" width="2" height="2" fill="#26302c"/>
<rect x="50" y="482" width="2" height="2" fill="#222c32"/>
<rect x="513" y="343" width="2" height="2" fill="#1e2a20"/>
<rect x="808" y="432" width="2" height="2" fill="#2c2c22"/>
<rect x="144" y="10" width="2" height="2" fill="#26302c"/>
<rect x="459" y="243" width="2" height="2" fill="#2c2c22"/>
<rect x="139" y="534" width="2" height="2" fill="#26302c"/>
<rect x="13" y="327" width="2" height="2" fill="#2c2c22"/>
<rect x="124" y="125" width="2" height="2" fill="#1e2a20"/>
<rect x="555" y="382" width="2" height="2" fill="#2e281e"/>
<rect x="702" y="110" width="2" height="2" fill="#222c32"/>
<rect x="57" y="370" width="2" height="2" fill="#2e281e"/>
<rect x="617" y="14" width="2" height="2" fill="#2e281e"/>
<rect x="643" y="278" width="2" height="2" fill="#2e281e"/>
<rect x="153" y="583" width="2" height="2" fill="#222c32"/>
<rect x="202" y="32" width="2" height="2" fill="#222c32"/>
<rect x="768" y="542" width="2" height="2" fill="#222c32"/>
<rect x="614" y="163" width="2" height="2" fill="#1e2a20"/>
<rect x="586" y="404" width="2" height="2" fill="#1e2a20"/>
<rect x="838" y="180" width="2" height="2" fill="#2c2c22"/>
<rect x="75" y="302" width="2" height="2" fill="#2c2c22"/>
<rect x="226" y="146" width="2" height="2" fill="#2c2c22"/>
<rect x="814" y="439" width="2" height="2" fill="#222c32"/>
<rect x="167" y="234" width="2" height="2" fill="#1e2a20"/>
<rect x="208" y="532" width="2" height="2" fill="#1e2a20"/>
<rect x="406" y="493" width="2" height="2" fill="#26302c"/>
<rect x="739" y="261" width="2" height="2" fill="#2c2c22"/>
<rect x="492" y="187" width="2" height="2" fill="#2c2c22"/>
<rect x="339" y="347" width="2" height="2" fill="#1e2a20"/>
<rect x="785" y="93" width="2" height="2" fill="#26302c"/>
<rect x="98" y="368" width="2" height="2" fill="#2c2c22"/>
<rect x="299" y="92" width="2" height="2" fill="#26302c"/>
<rect x="29" y="90" width="2" height="2" fill="#26302c"/>
<rect x="601" y="434" width="2" height="2" fill="#26302c"/>
<rect x="739" y="448" width="2" height="2" fill="#2c2c22"/>
<rect x="705" y="481" width="2" height="2" fill="#26302c"/>
<rect x="759" y="445" width="2" height="2" fill="#2e281e"/>
<rect x="94" y="128" width="2" height="2" fill="#26302c"/>
<rect x="31" y="556" width="2" height="2" fill="#26302c"/>
<rect x="712" y="373" width="2" height="2" fill="#222c32"/>
<rect x="412" y="86" width="2" height="2" fill="#2c2c22"/>
<rect x="255" y="203" width="2" height="2" fill="#222c32"/>
<rect x="20" y="158" width="2" height="2" fill="#222c32"/>
<rect x="44" y="447" width="2" height="2" fill="#222c32"/>
<rect x="664" y="356" width="2" height="2" fill="#2e281e"/>
<rect x="734" y="366" width="2" height="2" fill="#26302c"/>
<rect x="681" y="28" width="2" height="2" fill="#1e2a20"/>
<rect x="667" y="209" width="2" height="2" fill="#26302c"/>
<rect x="465" y="135" width="2" height="2" fill="#26302c"/>
<rect x="496" y="175" width="2" height="2" fill="#2e281e"/>
<rect x="3" y="126" width="2" height="2" fill="#26302c"/>
<rect x="6" y="292" width="2" height="2" fill="#2e281e"/>
<rect x="600" y="485" width="2" height="2" fill="#2e281e"/>
<rect x="512" y="560" width="2" height="2" fill="#1e2a20"/>
<rect x="226" y="553" width="2" height="2" fill="#222c32"/>
<rect x="703" y="550" width="2" height="2" fill="#2c2c22"/>
<rect x="431" y="73" width="2" height="2" fill="#26302c"/>
<rect x="424" y="580" width="2" height="2" fill="#1e2a20"/>
<rect x="679" y="371" width="2" height="2" fill="#222c32"/>
<rect x="84" y="544" width="2" height="2" fill="#26302c"/>
<rect x="365" y="381" width="2" height="2" fill="#222c32"/>
<rect x="179" y="161" width="2" height="2" fill="#1e2a20"/>
<rect x="433" y="228" width="2" height="2" fill="#2c2c22"/>
<rect x="814" y="83" width="2" height="2" fill="#1e2a20"/>
<rect x="651" y="443" width="2" height="2" fill="#26302c"/>
<rect x="302" y="198" width="2" height="2" fill="#2c2c22"/>
<rect x="748" y="269" width="2" height="2" fill="#1e2a20"/>
<rect x="640" y="107" width="2" height="2" fill="#2e281e"/>
<rect x="595" y="158" width="2" height="2" fill="#2c2c22"/>
<rect x="110" y="276" width="2" height="2" fill="#2c2c22"/>
<rect x="439" y="164" width="2" height="2" fill="#1e2a20"/>
<rect x="135" y="100" width="2" height="2" fill="#2c2c22"/>
<rect x="624" y="357" width="2" height="2" fill="#222c32"/>
<rect x="140" y="199" width="2" height="2" fill="#2c2c22"/>
<rect x="224" y="559" width="2" height="2" fill="#26302c"/>
<rect x="144" y="388" width="2" height="2" fill="#2c2c22"/>
<rect x="332" y="576" width="2" height="2" fill="#222c32"/>
<rect x="633" y="260" width="2" height="2" fill="#2c2c22"/>
<rect x="96" y="534" width="2" height="2" fill="#222c32"/>
<rect x="180" y="233" width="2" height="2" fill="#26302c"/>
<rect x="13" y="501" width="2" height="2" fill="#2e281e"/>
<rect x="598" y="298" width="2" height="2" fill="#222c32"/>
<rect x="400" y="92" width="2" height="2" fill="#1e2a20"/>
<rect x="637" y="13" width="2" height="2" fill="#2c2c22"/>
<rect x="783" y="257" width="2" height="2" fill="#1e2a20"/>
<rect x="507" y="382" width="2" height="2" fill="#2c2c22"/>
<rect x="576" y="385" width="2" height="2" fill="#1e2a20"/>
<rect x="735" y="401" width="2" height="2" fill="#26302c"/>
<rect x="392" y="190" width="2" height="2" fill="#26302c"/>
<rect x="771" y="149" width="2" height="2" fill="#2e281e"/>
<rect x="615" y="372" width="2" height="2" fill="#222c32"/>
<rect x="733" y="288" width="2" height="2" fill="#26302c"/>
<rect x="537" y="245" width="2" height="2" fill="#2c2c22"/>
<rect x="771" y="199" width="2" height="2" fill="#26302c"/>
<rect x="336" y="292" width="2" height="2" fill="#26302c"/>
<rect x="35" y="322" width="2" height="2" fill="#2c2c22"/>
<rect x="618" y="557" width="2" height="2" fill="#2c2c22"/>
<rect x="449" y="68" width="2" height="2" fill="#1e2a20"/>
<rect x="395" y="128" width="2" height="2" fill="#2e281e"/>
<rect x="442" y="378" width="2" height="2" fill="#222c32"/>
<rect x="451" y="246" width="2" height="2" fill="#2e281e"/>
<rect x="183" y="404" width="2" height="2" fill="#2e281e"/>
<rect x="444" y="546" width="2" height="2" fill="#1e2a20"/>
<rect x="308" y="43" width="2" height="2" fill="#222c32"/>
<rect x="330" y="45" width="2" height="2" fill="#26302c"/>
<rect x="362" y="252" width="2" height="2" fill="#222c32"/>
<rect x="501" y="73" width="2" height="2" fill="#222c32"/>
<rect x="640" y="550" width="2" height="2" fill="#1e2a20"/>
<rect x="837" y="582" width="2" height="2" fill="#2e281e"/>
<rect x="399" y="105" width="2" height="2" fill="#26302c"/>
<rect x="698" y="375" width="2" height="2" fill="#2e281e"/>
<rect x="554" y="424" width="2" height="2" fill="#2c2c22"/>
<rect x="306" y="377" width="2" height="2" fill="#2e281e"/>
<rect x="405" y="179" width="2" height="2" fill="#1e2a20"/>
<rect x="561" y="458" width="2" height="2" fill="#2e281e"/>
<rect x="307" y="499" width="2" height="2" fill="#222c32"/>
<rect x="608" y="405" width="2" height="2" fill="#2e281e"/>
<rect x="586" y="287" width="2" height="2" fill="#222c32"/>
<rect x="310" y="386" width="2" height="2" fill="#222c32"/>
<rect x="414" y="256" width="2" height="2" fill="#26302c"/>
<rect x="569" y="218" width="2" height="2" fill="#222c32"/>
<rect x="737" y="43" width="2" height="2" fill="#1e2a20"/>
<rect x="781" y="461" width="2" height="2" fill="#2c2c22"/>
<rect x="458" y="208" width="2" height="2" fill="#1e2a20"/>
<rect x="15" y="17" width="2" height="2" fill="#26302c"/>
<rect x="566" y="154" width="2" height="2" fill="#26302c"/>
<rect x="499" y="501" width="2" height="2" fill="#2c2c22"/>
<rect x="670" y="209" width="2" height="2" fill="#2c2c22"/>
<rect x="181" y="241" width="2" height="2" fill="#1e2a20"/>
<rect x="146" y="522" width="2" height="2" fill="#1e2a20"/>
<rect x="842" y="62" width="2" height="2" fill="#1e2a20"/>
<rect x="680" y="492" width="2" height="2" fill="#2c2c22"/>
<rect x="427" y="133" width="2" height="2" fill="#26302c"/>
<rect x="640" y="262" width="2" height="2" fill="#26302c"/>
<rect x="479" y="162" width="2" height="2" fill="#2c2c22"/>
<rect x="713" y="282" width="2" height="2" fill="#1e2a20"/>
<rect x="52" y="279" width="2" height="2" fill="#2c2c22"/>
<rect x="604" y="152" width="2" height="2" fill="#2c2c22"/>
<rect x="466" y="506" width="2" height="2" fill="#26302c"/>
<rect x="140" y="194" width="2" height="2" fill="#1e2a20"/>
<rect x="430" y="181" width="2" height="2" fill="#2e281e"/>
<rect x="324" y="251" width="2" height="2" fill="#26302c"/>
<rect x="157" y="217" width="2" height="2" fill="#26302c"/>
<rect x="20" y="36" width="2" height="2" fill="#222c32"/>
<rect x="697" y="64" width="2" height="2" fill="#2e281e"/>
<rect x="419" y="526" width="2" height="2" fill="#26302c"/>
<rect x="185" y="249" width="2" height="2" fill="#2c2c22"/>
<rect x="293" y="505" width="2" height="2" fill="#222c32"/>
<rect x="296" y="458" width="2" height="2" fill="#1e2a20"/>
<rect x="665" y="131" width="2" height="2" fill="#2e281e"/>
<rect x="296" y="155" width="2" height="2" fill="#26302c"/>
<rect x="713" y="178" width="2" height="2" fill="#2e281e"/>
<rect x="349" y="300" width="2" height="2" fill="#222c32"/>
<rect x="753" y="208" width="2" height="2" fill="#2c2c22"/>
<rect x="565" y="465" width="2" height="2" fill="#222c32"/>
<rect x="167" y="420" width="2" height="2" fill="#2c2c22"/>
<rect x="506" y="375" width="2" height="2" fill="#26302c"/>
<rect x="345" y="329" width="2" height="2" fill="#2e281e"/>
<rect x="471" y="39" width="2" height="2" fill="#222c32"/>
<rect x="95" y="37" width="2" height="2" fill="#2e281e"/>
<rect x="525" y="388" width="2" height="2" fill="#1e2a20"/>
<rect x="784" y="362" width="2" height="2" fill="#1e2a20"/>
<rect x="128" y="397" width="2" height="2" fill="#1e2a20"/>
<rect x="756" y="58" width="2" height="2" fill="#26302c"/>
<rect x="576" y="273" width="2" height="2" fill="#2c2c22"/>
<rect x="89" y="114" width="2" height="2" fill="#26302c"/>
<rect x="365" y="68" width="2" height="2" fill="#26302c"/>
<rect x="319" y="483" width="2" height="2" fill="#222c32"/>
<rect x="485" y="158" width="2" height="2" fill="#222c32"/>
<rect x="161" y="30" width="2" height="2" fill="#26302c"/>
<rect x="372" y="379" width="2" height="2" fill="#26302c"/>
<rect x="430" y="310" width="2" height="2" fill="#26302c"/>
<rect x="667" y="252" width="2" height="2" fill="#2e281e"/>
<rect x="386" y="18" width="2" height="2" fill="#2e281e"/>
<rect x="513" y="581" width="2" height="2" fill="#2c2c22"/>
<rect x="411" y="247" width="2" height="2" fill="#26302c"/>
<rect x="73" y="282" width="2" height="2" fill="#2c2c22"/>
<rect x="541" y="256" width="2" height="2" fill="#26302c"/>
<rect x="590" y="80" width="2" height="2" fill="#26302c"/>
<rect x="190" y="80" width="2" height="2" fill="#2e281e"/>
<rect x="17" y="424" width="2" height="2" fill="#2c2c22"/>
<rect x="390" y="438" width="2" height="2" fill="#26302c"/>
<rect x="317" y="440" width="2" height="2" fill="#2c2c22"/>
<rect x="630" y="58" width="2" height="2" fill="#1e2a20"/>
<rect x="612" y="275" width="2" height="2" fill="#222c32"/>
<rect x="788" y="40" width="2" height="2" fill="#26302c"/>
<rect x="12" y="18" width="2" height="2" fill="#1e2a20"/>
<rect x="71" y="189" width="2" height="2" fill="#1e2a20"/>
<rect x="145" y="505" width="2" height="2" fill="#2e281e"/>
<rect x="526" y="192" width="2" height="2" fill="#1e2a20"/>
<rect x="628" y="280" width="2" height="2" fill="#2c2c22"/>
<rect x="127" y="468" width="2" height="2" fill="#222c32"/>
<rect x="822" y="104" width="2" height="2" fill="#2e281e"/>
<rect x="412" y="457" width="2" height="2" fill="#2e281e"/>
<rect x="815" y="461" width="2" height="2" fill="#1e2a20"/>
<rect x="289" y="171" width="2" height="2" fill="#1e2a20"/>
<rect x="840" y="414" width="2" height="2" fill="#1e2a20"/>
<rect x="288" y="358" width="2" height="2" fill="#26302c"/>
<rect x="717" y="356" width="2" height="2" fill="#222c32"/>
<rect x="505" y="571" width="2" height="2" fill="#2c2c22"/>
<rect x="326" y="404" width="2" height="2" fill="#1e2a20"/>
<rect x="665" y="145" width="2" height="2" fill="#2e281e"/>
<rect x="246" y="11" width="2" height="2" fill="#222c32"/>
<rect x="232" y="100" width="2" height="2" fill="#26302c"/>
<rect x="250" y="91" width="2" height="2" fill="#1e2a20"/>
<rect x="128" y="571" width="2" height="2" fill="#1e2a20"/>
<rect x="591" y="535" width="2" height="2" fill="#222c32"/>
<rect x="462" y="320" width="2" height="2" fill="#2e281e"/>
<rect x="688" y="125" width="2" height="2" fill="#2c2c22"/>
<rect x="268" y="43" width="2" height="2" fill="#2e281e"/>
<rect x="402" y="129" width="2" height="2" fill="#222c32"/>
<rect x="506" y="15" width="2" height="2" fill="#2e281e"/>
<rect x="397" y="60" width="2" height="2" fill="#222c32"/>
<rect x="666" y="144" width="2" height="2" fill="#1e2a20"/>
<rect x="450" y="159" width="2" height="2" fill="#1e2a20"/>
<rect x="278" y="301" width="2" height="2" fill="#2c2c22"/>
<rect x="165" y="121" width="2" height="2" fill="#2c2c22"/>
<rect x="695" y="177" width="2" height="2" fill="#1e2a20"/>
<rect x="487" y="241" width="2" height="2" fill="#1e2a20"/>
<rect x="739" y="152" width="2" height="2" fill="#2e281e"/>
<rect x="324" y="71" width="2" height="2" fill="#2e281e"/>
<rect x="679" y="100" width="2" height="2" fill="#1e2a20"/>
<rect x="28" y="171" width="2" height="2" fill="#1e2a20"/>
<rect x="20" y="29" width="2" height="2" fill="#1e2a20"/>
<rect x="420" y="336" width="2" height="2" fill="#222c32"/>
<rect x="798" y="171" width="2" height="2" fill="#26302c"/>
<rect x="816" y="451" width="2" height="2" fill="#1e2a20"/>
<rect x="831" y="156" width="2" height="2" fill="#26302c"/>
<rect x="293" y="582" width="2" height="2" fill="#2e281e"/>
<rect x="74" y="39" width="2" height="2" fill="#1e2a20"/>
<rect x="320" y="416" width="2" height="2" fill="#2e281e"/>
<rect x="817" y="533" width="2" height="2" fill="#26302c"/>
<rect x="744" y="378" width="2" height="2" fill="#26302c"/>
<rect x="609" y="62" width="2" height="2" fill="#222c32"/>
<rect x="487" y="378" width="2" height="2" fill="#1e2a20"/>
<rect x="340" y="268" width="2" height="2" fill="#2c2c22"/>
<rect x="321" y="145" width="2" height="2" fill="#2c2c22"/>
<rect x="150" y="551" width="2" height="2" fill="#222c32"/>
<rect x="53" y="328" width="2" height="2" fill="#26302c"/>
<rect x="722" y="37" width="2" height="2" fill="#1e2a20"/>
<rect x="612" y="382" width="2" height="2" fill="#2e281e"/>
<rect x="50" y="93" width="2" height="2" fill="#26302c"/>
<rect x="810" y="399" width="2" height="2" fill="#222c32"/>
<rect x="509" y="264" width="2" height="2" fill="#26302c"/>
<rect x="407" y="224" width="2" height="2" fill="#2e281e"/>
<rect x="109" y="287" width="2" height="2" fill="#2c2c22"/>
<rect x="382" y="474" width="2" height="2" fill="#26302c"/>
<rect x="404" y="535" width="2" height="2" fill="#26302c"/>
<rect x="137" y="489" width="2" height="2" fill="#26302c"/>
<rect x="805" y="508" width="2" height="2" fill="#2c2c22"/>
<rect x="671" y="561" width="2" height="2" fill="#2e281e"/>
<rect x="726" y="371" width="2" height="2" fill="#2e281e"/>
<rect x="838" y="195" width="2" height="2" fill="#2c2c22"/>
<rect x="413" y="371" width="2" height="2" fill="#2c2c22"/>
<rect x="288" y="433" width="2" height="2" fill="#2c2c22"/>
<rect x="616" y="328" width="2" height="2" fill="#2c2c22"/>
<rect x="380" y="96" width="2" height="2" fill="#2e281e"/>
<rect x="356" y="100" width="2" height="2" fill="#222c32"/>
<rect x="493" y="181" width="2" height="2" fill="#2c2c22"/>
<rect x="226" y="73" width="2" height="2" fill="#2e281e"/>
<rect x="779" y="76" width="2" height="2" fill="#1e2a20"/>
<rect x="51" y="525" width="2" height="2" fill="#2c2c22"/>
<rect x="484" y="490" width="2" height="2" fill="#26302c"/>
<rect x="224" y="126" width="2" height="2" fill="#222c32"/>
<rect x="374" y="160" width="2" height="2" fill="#2c2c22"/>
<rect x="798" y="66" width="2" height="2" fill="#222c32"/>
<rect x="359" y="103" width="2" height="2" fill="#222c32"/>
<rect x="126" y="378" width="2" height="2" fill="#2e281e"/>
<rect x="696" y="206" width="2" height="2" fill="#2c2c22"/>
<rect x="383" y="464" width="2" height="2" fill="#1e2a20"/>
<rect x="248" y="217" width="2" height="2" fill="#26302c"/>
<rect x="786" y="136" width="2" height="2" fill="#1e2a20"/>
<rect x="157" y="495" width="2" height="2" fill="#1e2a20"/>
<rect x="665" y="419" width="2" height="2" fill="#2c2c22"/>
<rect x="519" y="487" width="2" height="2" fill="#1e2a20"/>
<rect x="631" y="448" width="2" height="2" fill="#2c2c22"/>
<rect x="179" y="362" width="2" height="2" fill="#2c2c22"/>
<rect x="503" y="126" width="2" height="2" fill="#26302c"/>
<rect x="597" y="309" width="2" height="2" fill="#26302c"/>
<rect x="448" y="210" width="2" height="2" fill="#222c32"/>
<rect x="726" y="507" width="2" height="2" fill="#2e281e"/>
<rect x="80" y="245" width="2" height="2" fill="#2e281e"/>
<rect x="117" y="393" width="2" height="2" fill="#2c2c22"/>
<rect x="162" y="488" width="2" height="2" fill="#222c32"/>
<rect x="34" y="414" width="2" height="2" fill="#1e2a20"/>
<rect x="514" y="13" width="2" height="2" fill="#1e2a20"/>
<rect x="804" y="567" width="2" height="2" fill="#26302c"/>
<rect x="106" y="421" width="2" height="2" fill="#222c32"/>
<rect x="672" y="509" width="2" height="2" fill="#1e2a20"/>
<rect x="648" y="45" width="2" height="2" fill="#26302c"/>
<rect x="822" y="295" width="2" height="2" fill="#1e2a20"/>
<rect x="24" y="473" width="2" height="2" fill="#2c2c22"/>
<rect x="20" y="566" width="2" height="2" fill="#2c2c22"/>
<rect x="534" y="107" width="2" height="2" fill="#222c32"/>
<rect x="217" y="480" width="2" height="2" fill="#26302c"/>
<rect x="19" y="543" width="2" height="2" fill="#2c2c22"/>
<rect x="227" y="491" width="2" height="2" fill="#1e2a20"/>
<rect x="401" y="147" width="2" height="2" fill="#2e281e"/>
<rect x="90" y="510" width="2" height="2" fill="#2c2c22"/>
<rect x="41" y="81" width="2" height="2" fill="#2e281e"/>
<rect x="506" y="448" width="2" height="2" fill="#26302c"/>
<rect x="107" y="243" width="2" height="2" fill="#2c2c22"/>
<rect x="468" y="141" width="2" height="2" fill="#2c2c22"/>
<rect x="129" y="339" width="2" height="2" fill="#2e281e"/>
<rect x="143" y="485" width="2" height="2" fill="#2e281e"/>
<rect x="599" y="353" width="2" height="2" fill="#1e2a20"/>
<rect x="454" y="237" width="2" height="2" fill="#4a5a52"/>
<rect x="670" y="205" width="2" height="2" fill="#5a5638"/>
<rect x="723" y="421" width="2" height="2" fill="#46564e"/>
<rect x="703" y="497" width="2" height="2" fill="#4a5a52"/>
<rect x="281" y="94" width="2" height="2" fill="#46564e"/>
<rect x="216" y="253" width="2" height="2" fill="#4a5a52"/>
<rect x="315" y="315" width="2" height="2" fill="#4a5a52"/>
<rect x="281" y="125" width="2" height="2" fill="#4a5a52"/>
<rect x="196" y="252" width="2" height="2" fill="#5a4a36"/>
<rect x="670" y="549" width="2" height="2" fill="#4a5a52"/>
<rect x="698" y="519" width="2" height="2" fill="#4a5a52"/>
<rect x="32" y="379" width="2" height="2" fill="#46564e"/>
<rect x="791" y="368" width="2" height="2" fill="#4a5a52"/>
<rect x="536" y="154" width="2" height="2" fill="#4a5a52"/>
<rect x="375" y="557" width="2" height="2" fill="#46564e"/>
<rect x="99" y="210" width="2" height="2" fill="#5a5638"/>
<rect x="106" y="352" width="2" height="2" fill="#46564e"/>
<rect x="75" y="349" width="2" height="2" fill="#5a5638"/>
<rect x="380" y="304" width="2" height="2" fill="#46564e"/>
<rect x="789" y="342" width="2" height="2" fill="#46564e"/>
<rect x="211" y="61" width="2" height="2" fill="#46564e"/>
<rect x="724" y="361" width="2" height="2" fill="#5a5638"/>
<rect x="561" y="126" width="2" height="2" fill="#46564e"/>
<rect x="398" y="325" width="2" height="2" fill="#5a4a36"/>
<rect x="405" y="189" width="2" height="2" fill="#5a5638"/>
<rect x="289" y="119" width="2" height="2" fill="#5a4a36"/>
<rect x="836" y="238" width="2" height="2" fill="#46564e"/>
<rect x="142" y="557" width="2" height="2" fill="#46564e"/>
<rect x="481" y="293" width="2" height="2" fill="#46564e"/>
<rect x="757" y="134" width="2" height="2" fill="#4a5a52"/>
<rect x="666" y="101" width="2" height="2" fill="#4a5a52"/>
<rect x="523" y="210" width="2" height="2" fill="#4a5a52"/>
<rect x="447" y="490" width="2" height="2" fill="#46564e"/>
<rect x="634" y="73" width="2" height="2" fill="#5a5638"/>
<rect x="853" y="400" width="2" height="2" fill="#5a5638"/>
<rect x="360" y="394" width="2" height="2" fill="#5a5638"/>
<rect x="583" y="364" width="2" height="2" fill="#46564e"/>
<rect x="708" y="308" width="2" height="2" fill="#5a4a36"/>
<rect x="233" y="373" width="2" height="2" fill="#5a5638"/>
<rect x="357" y="69" width="2" height="2" fill="#5a4a36"/>
<rect x="660" y="347" width="2" height="2" fill="#5a4a36"/>
<rect x="344" y="581" width="2" height="2" fill="#5a5638"/>
<rect x="361" y="461" width="2" height="2" fill="#4a5a52"/>
<rect x="328" y="270" width="2" height="2" fill="#5a4a36"/>
<rect x="250" y="213" width="2" height="2" fill="#46564e"/>
<rect x="338" y="329" width="2" height="2" fill="#5a4a36"/>
<rect x="559" y="14" width="2" height="2" fill="#5a4a36"/>
<rect x="329" y="183" width="2" height="2" fill="#46564e"/>
<rect x="693" y="260" width="2" height="2" fill="#5a4a36"/>
<rect x="502" y="61" width="2" height="2" fill="#46564e"/>
<rect x="281" y="495" width="2" height="2" fill="#5a5638"/>
<rect x="827" y="127" width="2" height="2" fill="#5a4a36"/>
<rect x="768" y="560" width="2" height="2" fill="#4a5a52"/>
<rect x="43" y="335" width="2" height="2" fill="#5a4a36"/>
<rect x="260" y="318" width="2" height="2" fill="#46564e"/>
<rect x="465" y="584" width="2" height="2" fill="#5a4a36"/>
<rect x="337" y="216" width="2" height="2" fill="#46564e"/>
<rect x="392" y="16" width="2" height="2" fill="#4a5a52"/>
<rect x="454" y="67" width="2" height="2" fill="#46564e"/>
<rect x="433" y="383" width="2" height="2" fill="#5a5638"/>
<rect x="759" y="565" width="2" height="2" fill="#5a4a36"/>
<rect x="347" y="451" width="2" height="2" fill="#46564e"/>
<rect x="597" y="439" width="2" height="2" fill="#4a5a52"/>
<rect x="149" y="193" width="2" height="2" fill="#4a5a52"/>
<rect x="712" y="305" width="2" height="2" fill="#4a5a52"/>
<rect x="566" y="180" width="2" height="2" fill="#46564e"/>
<rect x="708" y="579" width="2" height="2" fill="#5a4a36"/>
<rect x="545" y="311" width="2" height="2" fill="#5a5638"/>
<rect x="436" y="118" width="2" height="2" fill="#5a5638"/>
<rect x="54" y="335" width="2" height="2" fill="#4a5a52"/>
<rect x="306" y="581" width="2" height="2" fill="#4a5a52"/>
<rect x="597" y="16" width="2" height="2" fill="#4a5a52"/>
<rect x="266" y="407" width="2" height="2" fill="#4a5a52"/>
<rect x="791" y="239" width="2" height="2" fill="#4a5a52"/>
<rect x="506" y="394" width="2" height="2" fill="#5a5638"/>
<rect x="153" y="452" width="2" height="2" fill="#46564e"/>
<rect x="751" y="525" width="2" height="2" fill="#5a5638"/>
<rect x="496" y="246" width="2" height="2" fill="#4a5a52"/>
<rect x="127" y="308" width="2" height="2" fill="#4a5a52"/>
<rect x="27" y="54" width="2" height="2" fill="#5a4a36"/>
<rect x="710" y="362" width="2" height="2" fill="#4a5a52"/>
<rect x="561" y="404" width="2" height="2" fill="#46564e"/>
<rect x="126" y="147" width="2" height="2" fill="#46564e"/>
<rect x="148" y="163" width="2" height="2" fill="#4a5a52"/>
<rect x="741" y="555" width="2" height="2" fill="#4a5a52"/>
<rect x="302" y="269" width="2" height="2" fill="#5a4a36"/>
<rect x="19" y="137" width="2" height="2" fill="#5a4a36"/>
<rect x="503" y="562" width="2" height="2" fill="#5a4a36"/>
<rect x="49" y="147" width="2" height="2" fill="#5a5638"/>
<rect x="40" y="545" width="2" height="2" fill="#5a5638"/>
<rect x="273" y="527" width="2" height="2" fill="#5a4a36"/>
<rect x="263" y="356" width="2" height="2" fill="#5a4a36"/>
<rect x="844" y="49" width="2" height="2" fill="#5a4a36"/>
<rect x="582" y="346" width="2" height="2" fill="#5a4a36"/>
<rect x="268" y="513" width="2" height="2" fill="#5a4a36"/>
<rect x="21" y="509" width="2" height="2" fill="#4a5a52"/>
<rect x="151" y="216" width="2" height="2" fill="#5a5638"/>
<rect x="9" y="517" width="2" height="2" fill="#5a4a36"/>
<rect x="485" y="76" width="2" height="2" fill="#5a4a36"/>
<rect x="291" y="384" width="2" height="2" fill="#4a5a52"/>
<rect x="365" y="535" width="2" height="2" fill="#5a5638"/>
<rect x="335" y="279" width="2" height="2" fill="#46564e"/>
<rect x="206" y="30" width="2" height="2" fill="#4a5a52"/>
<rect x="296" y="100" width="2" height="2" fill="#5a5638"/>
<rect x="82" y="165" width="2" height="2" fill="#5a5638"/>
<rect x="479" y="279" width="2" height="2" fill="#5a5638"/>
<rect x="139" y="213" width="2" height="2" fill="#5a4a36"/>
<rect x="326" y="561" width="2" height="2" fill="#5a5638"/>
<rect x="258" y="284" width="2" height="2" fill="#5a5638"/>
<rect x="197" y="270" width="2" height="2" fill="#5a5638"/>
<rect x="812" y="584" width="2" height="2" fill="#5a4a36"/>
<rect x="507" y="222" width="2" height="2" fill="#5a5638"/>
<rect x="350" y="303" width="2" height="2" fill="#5a5638"/>
<rect x="752" y="81" width="2" height="2" fill="#4a5a52"/>
<rect x="469" y="165" width="2" height="2" fill="#5a4a36"/>
<rect x="27" y="423" width="2" height="2" fill="#5a5638"/>
<rect x="269" y="234" width="2" height="2" fill="#4a5a52"/>
<rect x="599" y="456" width="2" height="2" fill="#5a5638"/>
<rect x="278" y="391" width="2" height="2" fill="#4a5a52"/>
<rect x="61" y="535" width="2" height="2" fill="#46564e"/>
<rect x="168" y="423" width="2" height="2" fill="#4a5a52"/>
<rect x="197" y="83" width="2" height="2" fill="#5a4a36"/>
<rect x="245" y="242" width="2" height="2" fill="#5a4a36"/>
<rect x="668" y="518" width="2" height="2" fill="#5a5638"/>
<rect x="808" y="111" width="2" height="2" fill="#46564e"/>
<rect x="586" y="392" width="2" height="2" fill="#46564e"/>
<rect x="773" y="25" width="2" height="2" fill="#5a4a36"/>
<rect x="216" y="497" width="2" height="2" fill="#46564e"/>
<rect x="781" y="66" width="2" height="2" fill="#46564e"/>
<rect x="101" y="535" width="2" height="2" fill="#5a5638"/>
<rect x="615" y="33" width="2" height="2" fill="#4a5a52"/>
<rect x="525" y="258" width="2" height="2" fill="#46564e"/>
<rect x="136" y="435" width="2" height="2" fill="#46564e"/>
<rect x="543" y="551" width="2" height="2" fill="#5a5638"/>
<rect x="492" y="422" width="2" height="2" fill="#46564e"/>
<rect x="798" y="395" width="2" height="2" fill="#46564e"/>
<rect x="807" y="74" width="2" height="2" fill="#46564e"/>
<rect x="777" y="513" width="2" height="2" fill="#4a5a52"/>
<rect x="840" y="402" width="2" height="2" fill="#4a5a52"/>
<rect x="683" y="131" width="2" height="2" fill="#46564e"/>
<rect x="647" y="60" width="2" height="2" fill="#5a4a36"/>
<rect x="860" y="364" width="2" height="2" fill="#5a5638"/>
<rect x="244" y="62" width="2" height="2" fill="#5a4a36"/>
<rect x="383" y="206" width="2" height="2" fill="#5a4a36"/>
<rect x="439" y="399" width="2" height="2" fill="#5a5638"/>
<rect x="370" y="304" width="2" height="2" fill="#5a5638"/>
<rect x="423" y="119" width="2" height="2" fill="#46564e"/>
<rect x="152" y="104" width="2" height="2" fill="#5a5638"/>
<rect x="470" y="154" width="2" height="2" fill="#4a5a52"/>
<rect x="147" y="210" width="2" height="2" fill="#4a5a52"/>
<rect x="175" y="189" width="2" height="2" fill="#5a5638"/>
<rect x="592" y="290" width="2" height="2" fill="#5a4a36"/>
<rect x="207" y="149" width="2" height="2" fill="#5a4a36"/>
<rect x="116" y="379" width="2" height="2" fill="#46564e"/>
<rect x="117" y="417" width="2" height="2" fill="#5a5638"/>
<rect x="289" y="479" width="2" height="2" fill="#5a4a36"/>
<rect x="656" y="107" width="2" height="2" fill="#5a5638"/>
<rect x="517" y="275" width="2" height="2" fill="#5a4a36"/>
<rect x="717" y="76" width="2" height="2" fill="#46564e"/>
<rect x="13" y="290" width="2" height="2" fill="#4a5a52"/>
<circle cx="785" cy="22" r="1.4" fill="#92a098"/>
<circle cx="775" cy="56" r="1.4" fill="#92a098"/>
<circle cx="799" cy="56" r="1.4" fill="#92a098"/>
<circle cx="778" cy="70" r="1.4" fill="#92a098"/>
<circle cx="86" cy="18" r="1.4" fill="#98925e"/>
<circle cx="246" cy="84" r="1.4" fill="#92a098"/>
<circle cx="224" cy="58" r="1.4" fill="#98925e"/>
<circle cx="206" cy="79" r="1.4" fill="#92a098"/>
<circle cx="124" cy="80" r="1.4" fill="#92a098"/>
<circle cx="65" cy="121" r="1.4" fill="#92a098"/>
<circle cx="70" cy="139" r="1.4" fill="#92a098"/>
<circle cx="29" cy="163" r="1.4" fill="#92a098"/>
<circle cx="36" cy="163" r="1.4" fill="#98925e"/>
<circle cx="274" cy="136" r="1.4" fill="#92a098"/>
<circle cx="209" cy="177" r="1.4" fill="#92a098"/>
<circle cx="195" cy="177" r="1.4" fill="#92a098"/>
<circle cx="222" cy="173" r="1.4" fill="#92a098"/>
<circle cx="132" cy="149" r="1.4" fill="#92a098"/>
<circle cx="232" cy="23" r="1.4" fill="#92a098"/>
<circle cx="220" cy="24" r="1.4" fill="#98925e"/>
<circle cx="188" cy="35" r="1.4" fill="#92a098"/>
<circle cx="443" cy="19" r="1.4" fill="#92a098"/>
<circle cx="448" cy="22" r="1.4" fill="#98925e"/>
<circle cx="504" cy="19" r="1.4" fill="#92a098"/>
<circle cx="492" cy="27" r="1.4" fill="#92a098"/>
<circle cx="388" cy="37" r="1.4" fill="#92a098"/>
<circle cx="434" cy="38" r="1.4" fill="#92a098"/>
<circle cx="391" cy="45" r="1.4" fill="#98925e"/>
<circle cx="364" cy="104" r="1.4" fill="#92a098"/>
<circle cx="377" cy="112" r="1.4" fill="#987448"/>
<circle cx="326" cy="99" r="1.4" fill="#98925e"/>
<circle cx="449" cy="125" r="1.4" fill="#92a098"/>
<circle cx="388" cy="137" r="1.4" fill="#92a098"/>
<circle cx="394" cy="145" r="1.4" fill="#92a098"/>
<circle cx="311" cy="146" r="1.4" fill="#98925e"/>
<circle cx="512" cy="77" r="1.4" fill="#987448"/>
<circle cx="526" cy="104" r="1.4" fill="#92a098"/>
<circle cx="536" cy="133" r="1.4" fill="#92a098"/>
<circle cx="557" cy="139" r="1.4" fill="#92a098"/>
<circle cx="481" cy="167" r="1.4" fill="#92a098"/>
<circle cx="414" cy="181" r="1.4" fill="#92a098"/>
<circle cx="438" cy="181" r="1.4" fill="#98925e"/>
<circle cx="619" cy="47" r="1.4" fill="#92a098"/>
<circle cx="716" cy="44" r="1.4" fill="#98925e"/>
<circle cx="794" cy="62" r="1.4" fill="#92a098"/>
<circle cx="817" cy="68" r="1.4" fill="#92a098"/>
<circle cx="666" cy="81" r="1.4" fill="#92a098"/>
<circle cx="688" cy="93" r="1.4" fill="#92a098"/>
<circle cx="668" cy="113" r="1.4" fill="#98925e"/>
<circle cx="690" cy="118" r="1.4" fill="#92a098"/>
<circle cx="629" cy="130" r="1.4" fill="#92a098"/>
<circle cx="622" cy="142" r="1.4" fill="#92a098"/>
<circle cx="729" cy="136" r="1.4" fill="#987448"/>
<circle cx="688" cy="148" r="1.4" fill="#98925e"/>
<circle cx="635" cy="158" r="1.4" fill="#92a098"/>
<circle cx="721" cy="159" r="1.4" fill="#98925e"/>
<circle cx="28" cy="233" r="1.4" fill="#92a098"/>
<circle cx="94" cy="243" r="1.4" fill="#92a098"/>
<circle cx="61" cy="246" r="1.4" fill="#92a098"/>
<circle cx="114" cy="265" r="1.4" fill="#92a098"/>
<circle cx="67" cy="285" r="1.4" fill="#98925e"/>
<circle cx="79" cy="321" r="1.4" fill="#92a098"/>
<circle cx="142" cy="310" r="1.4" fill="#92a098"/>
<circle cx="167" cy="283" r="1.4" fill="#987448"/>
<circle cx="184" cy="241" r="1.4" fill="#92a098"/>
<circle cx="242" cy="224" r="1.4" fill="#92a098"/>
<circle cx="135" cy="196" r="1.4" fill="#98925e"/>
<circle cx="219" cy="305" r="1.4" fill="#92a098"/>
<circle cx="228" cy="325" r="1.4" fill="#92a098"/>
<circle cx="205" cy="362" r="1.4" fill="#98925e"/>
<circle cx="229" cy="360" r="1.4" fill="#98925e"/>
<circle cx="139" cy="355" r="1.4" fill="#92a098"/>
<circle cx="163" cy="360" r="1.4" fill="#98925e"/>
<circle cx="67" cy="298" r="1.4" fill="#92a098"/>
<circle cx="392" cy="211" r="1.4" fill="#92a098"/>
<circle cx="448" cy="219" r="1.4" fill="#92a098"/>
<circle cx="352" cy="239" r="1.4" fill="#92a098"/>
<circle cx="393" cy="251" r="1.4" fill="#92a098"/>
<circle cx="382" cy="267" r="1.4" fill="#92a098"/>
<circle cx="563" cy="247" r="1.4" fill="#92a098"/>
<circle cx="551" cy="244" r="1.4" fill="#987448"/>
<circle cx="413" cy="317" r="1.4" fill="#92a098"/>
<circle cx="416" cy="312" r="1.4" fill="#92a098"/>
<circle cx="333" cy="296" r="1.4" fill="#92a098"/>
<circle cx="466" cy="305" r="1.4" fill="#92a098"/>
<circle cx="375" cy="350" r="1.4" fill="#92a098"/>
<circle cx="301" cy="372" r="1.4" fill="#92a098"/>
<circle cx="481" cy="363" r="1.4" fill="#92a098"/>
<circle cx="465" cy="386" r="1.4" fill="#92a098"/>
<circle cx="468" cy="388" r="1.4" fill="#98925e"/>
<circle cx="507" cy="305" r="1.4" fill="#92a098"/>
<circle cx="491" cy="334" r="1.4" fill="#92a098"/>
<circle cx="585" cy="234" r="1.4" fill="#92a098"/>
<circle cx="651" cy="241" r="1.4" fill="#92a098"/>
<circle cx="647" cy="256" r="1.4" fill="#92a098"/>
<circle cx="689" cy="239" r="1.4" fill="#92a098"/>
<circle cx="710" cy="254" r="1.4" fill="#92a098"/>
<circle cx="736" cy="263" r="1.4" fill="#987448"/>
<circle cx="590" cy="266" r="1.4" fill="#98925e"/>
<circle cx="684" cy="275" r="1.4" fill="#92a098"/>
<circle cx="738" cy="291" r="1.4" fill="#92a098"/>
<circle cx="691" cy="291" r="1.4" fill="#987448"/>
<circle cx="588" cy="327" r="1.4" fill="#92a098"/>
<circle cx="611" cy="334" r="1.4" fill="#98925e"/>
<circle cx="721" cy="333" r="1.4" fill="#92a098"/>
<circle cx="722" cy="340" r="1.4" fill="#98925e"/>
<circle cx="629" cy="373" r="1.4" fill="#92a098"/>
<circle cx="655" cy="355" r="1.4" fill="#987448"/>
<circle cx="723" cy="358" r="1.4" fill="#92a098"/>
<circle cx="737" cy="357" r="1.4" fill="#92a098"/>
<circle cx="80" cy="391" r="1.4" fill="#98925e"/>
<circle cx="93" cy="398" r="1.4" fill="#92a098"/>
<circle cx="209" cy="421" r="1.4" fill="#92a098"/>
<circle cx="243" cy="419" r="1.4" fill="#92a098"/>
<circle cx="11" cy="478" r="1.4" fill="#98925e"/>
<circle cx="119" cy="470" r="1.4" fill="#98925e"/>
<circle cx="130" cy="468" r="1.4" fill="#92a098"/>
<circle cx="103" cy="486" r="1.4" fill="#98925e"/>
<circle cx="92" cy="499" r="1.4" fill="#92a098"/>
<circle cx="171" cy="491" r="1.4" fill="#98925e"/>
<circle cx="121" cy="503" r="1.4" fill="#98925e"/>
<circle cx="184" cy="506" r="1.4" fill="#92a098"/>
<circle cx="229" cy="477" r="1.4" fill="#92a098"/>
<circle cx="23" cy="516" r="1.4" fill="#92a098"/>
<circle cx="29" cy="527" r="1.4" fill="#92a098"/>
<circle cx="112" cy="532" r="1.4" fill="#92a098"/>
<circle cx="116" cy="538" r="1.4" fill="#98925e"/>
<circle cx="145" cy="528" r="1.4" fill="#98925e"/>
<circle cx="64" cy="557" r="1.4" fill="#92a098"/>
<circle cx="158" cy="584" r="1.4" fill="#98925e"/>
<circle cx="164" cy="586" r="1.4" fill="#92a098"/>
<circle cx="288" cy="494" r="1.4" fill="#98925e"/>
<circle cx="577" cy="402" r="1.4" fill="#92a098"/>
<circle cx="516" cy="416" r="1.4" fill="#92a098"/>
<circle cx="491" cy="422" r="1.4" fill="#92a098"/>
<circle cx="426" cy="413" r="1.4" fill="#92a098"/>
<circle cx="423" cy="421" r="1.4" fill="#98925e"/>
<circle cx="319" cy="412" r="1.4" fill="#92a098"/>
<circle cx="347" cy="409" r="1.4" fill="#98925e"/>
<circle cx="450" cy="452" r="1.4" fill="#92a098"/>
<circle cx="490" cy="459" r="1.4" fill="#92a098"/>
<circle cx="525" cy="464" r="1.4" fill="#92a098"/>
<circle cx="500" cy="499" r="1.4" fill="#987448"/>
<circle cx="417" cy="526" r="1.4" fill="#92a098"/>
<circle cx="385" cy="525" r="1.4" fill="#98925e"/>
<circle cx="339" cy="541" r="1.4" fill="#92a098"/>
<circle cx="503" cy="536" r="1.4" fill="#92a098"/>
<circle cx="553" cy="526" r="1.4" fill="#92a098"/>
<circle cx="548" cy="537" r="1.4" fill="#92a098"/>
<circle cx="497" cy="552" r="1.4" fill="#92a098"/>
<circle cx="557" cy="556" r="1.4" fill="#98925e"/>
<circle cx="475" cy="563" r="1.4" fill="#92a098"/>
<circle cx="520" cy="564" r="1.4" fill="#98925e"/>
<circle cx="310" cy="578" r="1.4" fill="#987448"/>
<circle cx="558" cy="562" r="1.4" fill="#92a098"/>
<circle cx="577" cy="401" r="1.4" fill="#92a098"/>
<circle cx="723" cy="422" r="1.4" fill="#92a098"/>
<circle cx="586" cy="454" r="1.4" fill="#92a098"/>
<circle cx="621" cy="465" r="1.4" fill="#92a098"/>
<circle cx="717" cy="453" r="1.4" fill="#98925e"/>
<circle cx="726" cy="451" r="1.4" fill="#92a098"/>
<circle cx="724" cy="461" r="1.4" fill="#92a098"/>
<circle cx="710" cy="468" r="1.4" fill="#92a098"/>
<circle cx="799" cy="470" r="1.4" fill="#98925e"/>
<circle cx="789" cy="489" r="1.4" fill="#98925e"/>
<circle cx="589" cy="498" r="1.4" fill="#92a098"/>
<circle cx="637" cy="511" r="1.4" fill="#92a098"/>
<circle cx="599" cy="513" r="1.4" fill="#98925e"/>
<circle cx="623" cy="524" r="1.4" fill="#92a098"/>
<circle cx="604" cy="555" r="1.4" fill="#92a098"/>
<circle cx="768" cy="543" r="1.4" fill="#98925e"/>
<circle cx="703" cy="532" r="1.4" fill="#92a098"/>
<circle cx="405" cy="108" r="1.4" fill="#92a098"/>
<circle cx="364" cy="107" r="1.4" fill="#92a098"/>
<circle cx="563" cy="246" r="1.4" fill="#92a098"/>
<circle cx="649" cy="243" r="1.4" fill="#92a098"/>
<circle cx="597" cy="248" r="1.4" fill="#92a098"/>
<circle cx="465" cy="278" r="1.4" fill="#92a098"/>
<circle cx="552" cy="285" r="1.4" fill="#92a098"/>
<circle cx="460" cy="217" r="1.4" fill="#92a098"/>
<circle cx="425" cy="436" r="1.4" fill="#92a098"/>
<circle cx="302" cy="354" r="1.4" fill="#92a098"/>
<circle cx="228" cy="358" r="1.4" fill="#92a098"/>
<circle cx="263" cy="376" r="1.4" fill="#98925e"/>
<circle cx="466" cy="387" r="1.4" fill="#98925e"/>
<circle cx="5" cy="469" r="1.4" fill="#92a098"/>
<circle cx="655" cy="508" r="1.4" fill="#92a098"/>
<circle cx="605" cy="554" r="1.4" fill="#92a098"/>
<circle cx="113" cy="528" r="1.4" fill="#92a098"/>
<circle cx="78" cy="238" r="1.4" fill="#92a098"/>
<circle cx="135" cy="214" r="1.4" fill="#98925e"/>
<circle cx="95" cy="241" r="1.4" fill="#92a098"/>
<circle cx="249" cy="64" r="3" fill="url(#mid)"/>
<circle cx="239" cy="148" r="3" fill="url(#mid)"/>
<circle cx="200" cy="185" r="3" fill="url(#mid)"/>
<circle cx="440" cy="25" r="3" fill="url(#mid)"/>
<circle cx="407" cy="84" r="3" fill="url(#mid)"/>
<circle cx="435" cy="124" r="3" fill="url(#mid)"/>
<circle cx="443" cy="129" r="3" fill="url(#mid)"/>
<circle cx="358" cy="170" r="3" fill="url(#mid)"/>
<circle cx="449" cy="194" r="3" fill="url(#mid)"/>
<circle cx="77" cy="237" r="3" fill="url(#mid)"/>
<circle cx="144" cy="329" r="3" fill="url(#mid)"/>
<circle cx="274" cy="202" r="3" fill="url(#mid)"/>
<circle cx="272" cy="225" r="3" fill="url(#mid)"/>
<circle cx="258" cy="363" r="3" fill="url(#mid)"/>
<circle cx="279" cy="369" r="3" fill="url(#mid)"/>
<circle cx="461" cy="279" r="3" fill="url(#mid)"/>
<circle cx="553" cy="287" r="3" fill="url(#mid)"/>
<circle cx="407" cy="313" r="3" fill="url(#mid)"/>
<circle cx="338" cy="335" r="3" fill="url(#mid)"/>
<circle cx="303" cy="355" r="3" fill="url(#mid)"/>
<circle cx="584" cy="357" r="3" fill="url(#mid)"/>
<circle cx="597" cy="364" r="3" fill="url(#mid)"/>
<circle cx="715" cy="383" r="3" fill="url(#mid)"/>
<circle cx="542" cy="484" r="3" fill="url(#mid)"/>
<circle cx="438" cy="470" r="3" fill="url(#mid)"/>
<circle cx="656" cy="508" r="3" fill="url(#mid)"/>
<circle cx="839" cy="459" r="3" fill="url(#mid)"/>
<circle cx="7" cy="469" r="3" fill="url(#mid)"/>
<circle cx="131" cy="560" r="3" fill="url(#mid)"/>
<circle cx="266" cy="438" r="3" fill="url(#mid)"/>
<circle cx="533" cy="415" r="3" fill="url(#mid)"/>
<circle cx="427" cy="437" r="3" fill="url(#mid)"/>
<circle cx="675" cy="140" r="2.1" fill="#d8e0a0" opacity="0.85"/>
<circle cx="399" cy="304" r="8" fill="url(#glow)"/>
<circle cx="331" cy="183" r="7" fill="url(#glow)"/>
<circle cx="382" cy="413" r="7" fill="url(#glow)"/>
<circle cx="537" cy="396" r="7" fill="url(#glow)"/>
<circle cx="482" cy="502" r="7" fill="url(#glow)"/>
<circle cx="589" cy="429" r="6.5" fill="url(#glow)"/>
</svg><div class="a" style="left:1338px;top:72px;width:1px;height:771px;background:#2a2a2a"></div>
<div class="a" style="left:1339px;top:72px;width:261px;height:25px;background:#e5e5e5;border-bottom:1px solid #1e1e1e"></div>
<div class="a" style="left:1339px;top:97px;width:261px;height:31px;background:#dcdcdc;border-bottom:1px solid #1e1e1e"></div>
<svg width="261" height="25" style="left:1339px;top:72px">
 <!-- new layer -->
 <path d="M8.5 5.5 L22.5 5.5 L22.5 18.5 L15.5 18.5 L8.5 11.5 Z" fill="#f4f6f8" stroke="#7b9cc6" stroke-width="1"/>
 <path d="M8.5 11.5 L15.5 11.5 L15.5 18.5 Z" fill="#dfe6ee" stroke="#6a7a90" stroke-width="0.9"/>
 <!-- duplicate -->
 <path d="M40.5 4.5 L50.5 4.5 L50.5 14.5 L40.5 14.5 Z" fill="#f4f6f8" stroke="#8aa6c8" stroke-width="1"/>
 <path d="M38 7 L48 7 L48 17 L38 17 Z" fill="#f4f6f8" stroke="#8aa6c8" stroke-width="1"/>
 <path d="M36 9.5 L45.5 9.5 L45.5 19.5 L39 19.5 L36 16.5 Z" fill="#f4f6f8" stroke="#7b8aa0" stroke-width="1"/>
 <!-- adjustment -->
 <circle cx="68" cy="12.2" r="7.2" fill="#e9eef4" stroke="#8eaed4" stroke-width="1.2"/>
 <path d="M62.9 17.3 A7.2 7.2 0 0 1 73.1 7.1 Z" fill="#8eaed4"/>
 <path d="M73.5 17 L80.5 17 L77 21 Z" fill="#9a9a9a"/>
 <!-- mask -->
 <rect x="89" y="5" width="16" height="14" fill="#8fb2dc"/>
 <circle cx="97" cy="12" r="4" fill="none" stroke="#e8eef6" stroke-width="1.4"/>
 <!-- lock -->
 <path d="M120 11 L120 8.5 Q120 5 123.3 5 Q126.6 5 126.6 8.5 L126.6 11" fill="none" stroke="#8eaed4" stroke-width="1.8"/>
 <rect x="117.5" y="10.5" width="12" height="9.5" rx="1.5" fill="#8eaed4"/>
 <rect x="122.7" y="13" width="1.4" height="3.5" fill="#e8eef6"/>
 <!-- lock transparency -->
 <rect x="143" y="5.5" width="11" height="10.5" fill="#c8d8ec" stroke="#8eaed4" stroke-width="0.8"/>
 <g fill="#f4f6fa"><rect x="143.5" y="6" width="3.5" height="3.5"/><rect x="150.5" y="6" width="3.5" height="3.5"/><rect x="147" y="9.5" width="3.5" height="3.5"/><rect x="143.5" y="13" width="3.5" height="3"/></g>
 <path d="M152.5 14 L152.5 12.5 Q152.5 10.5 155 10.5 Q157.5 10.5 157.5 12.5 L157.5 14" fill="none" stroke="#8eaed4" stroke-width="1.5"/>
 <rect x="151" y="13.5" width="8.5" height="7" rx="1" fill="#8eaed4"/>
 <!-- trash -->
 <rect x="206" y="7" width="15" height="1.6" fill="#8eaed4"/>
 <rect x="210.5" y="5.2" width="6" height="2" fill="none" stroke="#8eaed4" stroke-width="1"/>
 <path d="M207.5 9.5 L219.5 9.5 L218.5 19.8 L208.5 19.8 Z" fill="#8eaed4"/>
 <g fill="#e8eef6"><rect x="210.3" y="11" width="1" height="7.5"/><rect x="213" y="11" width="1" height="7.5"/><rect x="215.7" y="11" width="1" height="7.5"/></g>
 <!-- menu -->
 <path d="M236.8 12.5 L241.8 12.5 L239.3 15 Z" fill="#2a6ac0"/>
 <g fill="#1a3a6a"><rect x="244" y="7.8" width="8" height="1.3"/><rect x="244" y="12.2" width="8" height="1.3"/><rect x="244" y="16.8" width="8" height="1.3"/></g>
</svg>
<!-- blend dropdown -->
<div class="a" style="left:1344px;top:102px;width:118px;height:19px;border:1px solid #7a7a7a;background:linear-gradient(#f8f8f8,#e6e6e6)"></div>
<span class="t" style="left:1353.5px;top:106.8px;font-size:12px;color:#1a1a30">Normal</span>
<svg width="10" height="6" style="left:1449px;top:111px"><path d="M0 0 L8 0 L4 4 Z" fill="#888"/></svg>
<span class="t" style="left:1473.5px;top:106.8px;font-size:12.2px;color:#4a4a58">Opacity:</span>
<div class="a" style="left:1528px;top:102px;width:65px;height:21px;border:1px solid #8a8a8a;background:#d2d2d2"></div>
<div class="a" style="left:1574px;top:103px;width:18px;height:19px;border-left:1px solid #8a8a8a;background:#e8e8e8"></div>
<span class="t" style="left:1535px;top:106.8px;font-size:12.2px;color:#666">100%</span>
<svg width="10" height="6" style="left:1579px;top:111px"><path d="M0 0 L9 0 L4.5 4.5 Z" fill="#9a9a9a"/></svg>
<!-- layer row -->
<div class="a" style="left:1369px;top:128px;width:221px;height:45px;background:linear-gradient(#6e9fda,#6592cf 50%,#5a88c2)"></div>
<svg width="18" height="12" style="left:1345px;top:145px">
 <path d="M1 6 Q9 -1.5 17 6 Q9 13.5 1 6 Z" fill="#fff" stroke="#222" stroke-width="1.3"/>
 <circle cx="9" cy="6" r="3.2" fill="#222"/><circle cx="8.5" cy="5" r="1" fill="#fff"/>
</svg>
<svg width="10" height="16" style="left:1376px;top:143px">
 <path d="M2.5 6 L2.5 4 Q2.5 1.5 5 1.5 Q7.5 1.5 7.5 4 L7.5 6 M2.5 10 L2.5 12 Q2.5 14.5 5 14.5 Q7.5 14.5 7.5 12 L7.5 10" fill="none" stroke="#4670a6" stroke-width="1.6"/>
 <rect x="4.3" y="5.5" width="1.4" height="5" fill="#4670a6"/>
</svg>
<div class="a" style="left:1400px;top:131px;width:56px;height:39px;background:#0e1514;border:1px solid #1e1e1e"></div>
<svg width="56" height="39" style="left:1400px;top:131px"><g fill="#3a6a6a"><rect x="17" y="36" width="1" height="1"/><rect x="10" y="25" width="1" height="1"/><rect x="40" y="32" width="1" height="1"/><rect x="42" y="6" width="1" height="1"/><rect x="40" y="2" width="1" height="1"/><rect x="32" y="18" width="1" height="1"/><rect x="37" y="16" width="1" height="1"/><rect x="14" y="32" width="1" height="1"/><rect x="36" y="32" width="1" height="1"/><rect x="27" y="11" width="1" height="1"/><rect x="16" y="11" width="1" height="1"/><rect x="35" y="26" width="1" height="1"/><rect x="49" y="2" width="1" height="1"/><rect x="44" y="6" width="1" height="1"/><rect x="12" y="4" width="1" height="1"/><rect x="21" y="3" width="1" height="1"/><rect x="19" y="32" width="1" height="1"/><rect x="40" y="26" width="1" height="1"/><rect x="47" y="29" width="1" height="1"/><rect x="27" y="30" width="1" height="1"/><rect x="10" y="25" width="1" height="1"/><rect x="8" y="4" width="1" height="1"/><rect x="10" y="33" width="1" height="1"/><rect x="15" y="18" width="1" height="1"/><rect x="45" y="29" width="1" height="1"/><rect x="51" y="21" width="1" height="1"/></g></svg>
<span class="t" style="left:1472px;top:145.5px;font-size:12px;font-style:italic;color:#fafafa">Background</span>
<svg width="18" height="18" style="left:1557px;top:141px">
 <rect x="1" y="1.5" width="10.5" height="10" fill="#e8f0fa" stroke="#3a5f96" stroke-width="0.8"/>
 <g fill="#3a5f96" opacity="0.8"><rect x="4.5" y="2" width="3.5" height="3.2"/><rect x="1.5" y="5" width="3.2" height="3.2"/><rect x="8" y="5" width="3.2" height="3.2"/><rect x="4.5" y="8.2" width="3.5" height="3.2"/></g>
 <path d="M10.5 11 L10.5 9.5 Q10.5 7.5 13 7.5 Q15.5 7.5 15.5 9.5 L15.5 11" fill="none" stroke="#3a5f96" stroke-width="1.3"/>
 <rect x="9" y="10.5" width="8.5" height="7" rx="1" fill="#5c8ac4" stroke="#3a5f96" stroke-width="0.9"/>
</svg>
<!-- right scrollbar -->
<div class="a" style="left:1590px;top:128px;width:10px;height:715px;background:#c8c8c8;border-left:1px solid #7a7a7a"></div>
<svg width="10" height="8" style="left:1591px;top:132px"><path d="M1.5 4.5 L7.5 4.5 L4.5 1.5 Z" fill="#222"/><rect x="1.5" y="5" width="6" height="1" fill="#fff"/></svg>
<svg width="10" height="8" style="left:1591px;top:832px"><path d="M1.5 2 L8.5 2 L5 5.5 Z" fill="#222"/></svg>
<!-- status bar -->
<div class="a" style="left:81px;top:698px;width:1243px;height:1px;background:#2a2a2a"></div>
<div class="a" style="left:81px;top:699px;width:243px;height:13px;background:#c2c2c2"></div>
<div class="a" style="left:140px;top:699px;width:1px;height:13px;background:#5a5a5a"></div>
<div class="a" style="left:312px;top:699px;width:12px;height:13px;background:#dcdcdc;border-left:1px solid #8a8a8a"></div>
<svg width="10" height="12" style="left:313px;top:699px"><path d="M3.5 2.5 L7 6.5 L3.5 10.5" fill="none" stroke="#444" stroke-width="1"/></svg>
<div class="a" style="left:81px;top:712px;width:1257px;height:1px;background:#2e2e2e"></div>
<div style="position:absolute;left:81px;top:699px;width:59px;height:13px;overflow:hidden"><span class="t" style="left:11.3px;top:3.2px;font-size:12.2px;color:#111">30.2%</span></div>
<span class="t" style="left:176.5px;top:699px;font-size:12.2px;color:#111">Doc: 16.1M/16.1M</span>
<svg width="10" height="10" style="left:328px;top:700px"><path d="M2 5.5 L6.5 1.5 L6.5 9.5 Z" fill="#444"/></svg>
<svg width="10" height="10" style="left:1313px;top:700px"><path d="M2.5 1.5 L7 5.5 L2.5 9.5 Z" fill="#222"/></svg>
<svg width="12" height="10" style="left:1326px;top:100px"><path d="M1.5 6.5 L9.5 6.5 L5.5 2 Z" fill="#222"/></svg>
<svg width="12" height="10" style="left:1326px;top:686px"><path d="M1.5 3 L9.5 3 L5.5 7.5 Z" fill="#222"/></svg>
<!-- options panel -->
<span class="t" style="left:93.5px;top:722px;font-size:12px;color:#111">Color Picker</span>
<div class="a" style="left:87px;top:745px;width:44px;height:40px;background:#8f8f8f;border:1px solid #6a6a6a"></div>
<div class="a" style="left:92px;top:750px;width:33px;height:30px;background:linear-gradient(#bcdcff,#eaf4ff);border:1px solid #4a5a6a"></div>
<div class="a" style="left:136px;top:750px;width:33px;height:30px;background:linear-gradient(#bcdcff,#eaf4ff);border:1px solid #4a5a6a"></div>
<span class="t" style="left:136px;width:33px;text-align:center;top:759.5px;font-size:11px;color:#111;letter-spacing:0.2px">3 X 3</span>
<div class="a" style="left:180px;top:750px;width:33px;height:30px;background:linear-gradient(#bcdcff,#eaf4ff);border:1px solid #4a5a6a"></div>
<span class="t" style="left:180px;width:33px;text-align:center;top:759.5px;font-size:11px;color:#111;letter-spacing:0.2px">5 X 5</span>
<span class="t" style="left:117px;top:796.8px;font-size:12.2px;color:#111">Point Sample</span>
<div class="a" style="left:227px;top:733px;width:1px;height:100px;background:repeating-linear-gradient(#222 0 1px,transparent 1px 3px)"></div>
<span class="t" style="left:240.3px;top:740px;font-size:12.2px;color:#111">Sample:</span>
<svg width="14" height="14" style="left:292px;top:741px">
 <defs><radialGradient id="rb" cx="0.4" cy="0.35"><stop offset="0" stop-color="#fff"/><stop offset="1" stop-color="#d0d0d0"/></radialGradient></defs>
 <circle cx="7" cy="6.8" r="6" fill="url(#rb)" stroke="#6a6a6a" stroke-width="1"/>
 <circle cx="7" cy="6.8" r="2.6" fill="#333"/>
</svg>
<span class="t" style="left:310.8px;top:742.5px;font-size:12.2px;color:#111">All Layers</span>
<svg width="14" height="14" style="left:292px;top:767px">
 <circle cx="7" cy="6.5" r="6" fill="url(#rb)" stroke="#6a6a6a" stroke-width="1"/>
</svg>
<span class="t" style="left:310.8px;top:768.5px;font-size:12.2px;color:#111">Current Layer</span>
<svg width="14" height="14" style="left:1264px;top:720px"><circle cx="6.5" cy="6.3" r="6.3" fill="#7a7a7a"/><path d="M4.3 4.9 Q4.3 2.5 6.6 2.5 Q8.9 2.5 8.9 4.6 Q8.9 5.9 7.3 6.7 Q6.7 7.1 6.7 8.3" fill="none" stroke="#fff" stroke-width="1.7"/><circle cx="6.7" cy="10.3" r="1.05" fill="#fff"/></svg>
<svg width="18" height="14" style="left:1286px;top:720px">
 <path d="M0.5 5.5 L5.5 5.5 L3 8 Z" fill="#2a6ac0"/>
 <g fill="#1a3a6a"><rect x="7.5" y="1.5" width="8" height="1.3"/><rect x="7.5" y="6.3" width="8" height="1.3"/><rect x="7.5" y="11" width="8" height="1.3"/></g>
</svg>
<svg width="12" height="8" style="left:1313px;top:722px"><path d="M1 1 L5.5 6 L10 1" fill="none" stroke="#222" stroke-width="2"/></svg>
<!-- taskbar -->
<div class="a" style="left:0;top:843px;width:1600px;height:57px;background:#dcdcdc;border-top:1px solid #2a2a2a"></div>
<div class="a" style="left:0;top:898px;width:1600px;height:1px;background:#2a2a2a"></div><div class="a" style="left:0;top:899px;width:1600px;height:1px;background:#9e9896"></div>
<div class="a" style="left:70px;top:851px;width:1px;height:42px;background:repeating-linear-gradient(#333 0 1px,transparent 1px 3px)"></div>
<div class="a" style="left:148px;top:851px;width:1px;height:42px;background:repeating-linear-gradient(#333 0 1px,transparent 1px 3px)"></div>
<div class="a" style="left:87px;top:847px;width:44px;height:36px;background:#c6c6c6;border:1px solid #acacac;border-radius:3px"></div>
<div class="a" style="left:1239px;top:847px;width:37px;height:36px;background:#c6c6c6;border:1px solid #acacac;border-radius:3px"></div>
<span class="tk" style="left:11.4px">Photo Bin</span>
<span class="tk" style="left:75.6px;font-size:12.5px">Tool Options</span>
<span class="tk" style="left:166.3px;font-size:12.2px">Undo</span>
<span class="tk" style="left:231.4px;font-size:12.2px">Redo</span>
<span class="tk" style="left:288.4px;font-size:12px">Rotate</span>
<span class="tk" style="left:348.4px;font-size:12px">Layout</span>
<span class="tk" style="left:401.6px;font-size:12px">Organizer</span>
<span class="tk" style="left:461.1px;font-size:12.2px">Home Screen</span>
<span class="tk" style="left:1241.4px;font-size:12px">Layers</span>
<span class="tk" style="left:1301.2px;font-size:12px">Effects</span>
<span class="tk" style="left:1364px;font-size:12px">Filters</span>
<span class="tk" style="left:1425px;font-size:12px">Styles</span>
<span class="tk" style="left:1479.3px;font-size:12px">Graphics</span>
<span class="tk" style="left:1550px;font-size:12px">More</span>
<svg width="1600" height="57" style="left:0;top:843px">
 <defs>
  <linearGradient id="bl" x1="0" y1="0" x2="0" y2="1"><stop offset="0" stop-color="#7fb6ea"/><stop offset="1" stop-color="#3f7fc8"/></linearGradient>
  <linearGradient id="bl2" x1="0" y1="0" x2="0" y2="1"><stop offset="0" stop-color="#a8ccef"/><stop offset="1" stop-color="#6ea0d8"/></linearGradient>
 </defs>
 <!-- photo bin -->
 <path d="M22.5 13 L22.5 10.5 Q22.5 9.5 23.5 9.5 L33 9.5 L34 11.5 L48 11.5 Q49.5 11.5 49.5 13 L49.5 31 Q49.5 32.5 48 32.5 L24 32.5 Q22.5 32.5 22.5 31 Z" fill="url(#bl)" stroke="#3a6ea8" stroke-width="0.8"/>
 <path d="M25 30 L30.5 23 L35 27 L39 22.5 L46.5 30 Z" fill="#1f5ea8"/>
 <circle cx="43.5" cy="17" r="1.8" fill="#1f5ea8"/>
 <!-- tool options -->
 <g fill="#2e6cb8"><circle cx="95.5" cy="14" r="1.4"/><circle cx="95.5" cy="18.7" r="1.4"/><circle cx="95.5" cy="23.3" r="1.4"/><rect x="98.5" y="13.2" width="12" height="1.5"/><rect x="98.5" y="17.9" width="9" height="1.5"/><rect x="98.5" y="22.5" width="5" height="1.5"/></g>
 <path d="M103 31.5 L105 25 L117 14.5 Q119 13 120.5 14.5 Q122 16.5 120.5 18 L108.5 28.5 Z" fill="#3a7ac8"/>
 <!-- undo -->
 <path d="M171 17.5 Q178 12 184.5 15.5 Q190.5 19.5 188 27.5 Q185.5 32.5 177.5 31.5" fill="none" stroke="#8ab2da" stroke-width="3.2"/>
 <path d="M167.5 17.5 L176 11 L175.5 23 Z" fill="#8ab2da"/>
 <!-- redo -->
 <path d="M250.5 17.5 Q243.5 12 237 15.5 Q231 19.5 233.5 27.5 Q236 32.5 244 31.5" fill="none" stroke="#8ab2da" stroke-width="3.2"/>
 <path d="M254 17.5 L245.5 11 L246 23 Z" fill="#8ab2da"/>
 <!-- rotate -->
 <path d="M298 15 Q304.5 9 311.5 12.5 Q318 16.5 317 24 Q315.5 31.5 308.5 34" fill="none" stroke="#8ab2da" stroke-width="3"/>
 <path d="M294 18 L303 10 L302.5 21 Z" fill="#8ab2da"/>
 <g fill="#8ab2da"><circle cx="294.3" cy="23.5" r="1.6"/><circle cx="296" cy="28.7" r="1.6"/><circle cx="300" cy="32.2" r="1.6"/><circle cx="304.5" cy="34" r="1.6"/></g>
 <path d="M325 19.5 L331 19.5 L328 23 Z" fill="#888"/>
 <!-- layout -->
 <rect x="352.5" y="11.5" width="26" height="20" fill="#c6dcf2" stroke="#7aa0c8" stroke-width="1"/>
 <rect x="354.5" y="13.5" width="7" height="16" fill="#9cc0e8"/>
 <rect x="363.5" y="13.5" width="13" height="7" fill="#9cc0e8"/>
 <rect x="363.5" y="22" width="13" height="7.5" fill="#7ca8d8"/>
 <path d="M376 35 L382 35 L379 38 Z" fill="#888"/>
 <!-- organizer -->
 <rect x="413" y="12" width="26.5" height="20.5" fill="#dfecf8" stroke="#2a5c9c" stroke-width="1"/>
 <rect x="413" y="12" width="26.5" height="3.5" fill="#2a5c9c"/>
 <g fill="#4f8ad0"><rect x="415.5" y="17.5" width="6" height="5.5"/><rect x="423.2" y="17.5" width="6" height="5.5"/><rect x="431" y="17.5" width="6" height="5.5"/><rect x="415.5" y="25" width="6" height="5.5"/><rect x="423.2" y="25" width="6" height="5.5"/><rect x="431" y="25" width="6" height="5.5"/></g>
 <!-- home -->
 <path d="M496.8 7 L511.5 20.5 L482 20.5 Z" fill="url(#bl)"/>
 <path d="M485.5 20.5 L508 20.5 L508 37 L485.5 37 Z" fill="#d8e8f8" stroke="#8ab2da" stroke-width="0.8"/>
 <rect x="493" y="25.5" width="7.5" height="11.5" fill="#3f86d8"/>
 <!-- layers -->
 <path d="M1244 24.5 L1248 22.3 L1257 28.2 L1266 22.3 L1270 24.5 L1257 33.3 Z" fill="#2f72c4" stroke="#2a60a8" stroke-width="0.6"/>
 <path d="M1257 9 L1270 17 L1257 25.5 L1244 17 Z" fill="url(#bl2)" stroke="#4a88cc" stroke-width="0.9"/>
 <!-- fx -->
 <text x="1305.5" y="31.5" font-family="Liberation Sans" font-style="italic" font-size="29" fill="#3f7ac0" stroke="#3f7ac0" stroke-width="0.5" letter-spacing="-1.5">fx</text>
 <!-- filters -->
 <circle cx="1379.4" cy="15.6" r="7.6" fill="#b8d8f6" stroke="#3a6aa8" stroke-width="0.8"/>
 <circle cx="1373.6" cy="25.7" r="7.8" fill="#6aa4e4" stroke="#2f5f9c" stroke-width="0.8" opacity="0.95"/>
 <circle cx="1385.2" cy="25.7" r="7.8" fill="#2f6cb8" stroke="#24528c" stroke-width="0.8" opacity="0.9"/>
 <path d="M1379.4 19.5 A7.8 7.8 0 0 1 1379.4 31.5 A7.8 7.8 0 0 1 1379.4 19.5 Z" fill="#4f88c8"/>
 <!-- styles -->
 <g transform="rotate(8 1447 27)"><rect x="1440" y="19" width="13" height="16" fill="#e6eef8" stroke="#4a6a98" stroke-width="1"/><rect x="1442" y="21" width="9" height="12" fill="#8ab8ea"/></g>
 <g transform="rotate(4 1442 23)"><rect x="1435" y="14" width="14" height="17" fill="#eef4fa" stroke="#4a6a98" stroke-width="1"/><rect x="1437" y="16" width="10" height="13" fill="#6aa0dc"/></g>
 <g transform="rotate(-4 1435 20)"><rect x="1427.5" y="11.5" width="15" height="17" fill="#f4f8fc" stroke="#4a6a98" stroke-width="1"/><rect x="1430" y="14" width="10" height="12" fill="#2f78c8"/></g>
 <!-- graphics plus -->
 <rect x="1499.2" y="13" width="4.4" height="21" fill="#4a88d0"/>
 <rect x="1490.5" y="21.3" width="22" height="4.4" fill="#4a88d0"/>
 <!-- more -->
 <rect x="1551" y="12" width="24" height="20" fill="#6aa4e4" stroke="#3f78c0" stroke-width="0.8"/>
 <rect x="1561.5" y="12" width="13.5" height="4.5" fill="#1f5aa8"/>
 <path d="M1581 19.5 L1588 19.5 L1584.5 23 Z" fill="#555"/>
</svg>
<div class="a" style="left:1005px;top:177px;width:419px;height:380px;background:#dfdfdf;border:1px solid #1a1a1a"></div>
<div class="a" style="left:1006px;top:178px;width:417px;height:19px;background:linear-gradient(#ececec,#d6d6d6 55%,#bdbdbd);border-bottom:1px solid #1a1a1a"></div>
<span class="t" style="left:1020px;top:182.8px;font-size:12px;color:#14142a">Levels</span>
<svg width="12" height="12" style="left:1406px;top:180px"><path d="M1.5 1.5 L10.5 10.5 M10.5 1.5 L1.5 10.5" stroke="#1a1a1a" stroke-width="2.6" stroke-linecap="square"/></svg>
<svg width="14" height="14" style="left:1016px;top:210px"><circle cx="6.8" cy="6.7" r="6.5" fill="#7a7a7a"/><path d="M4.6 5.2 Q4.6 2.8 6.9 2.8 Q9.2 2.8 9.2 4.9 Q9.2 6.2 7.6 7 Q7 7.4 7 8.6" fill="none" stroke="#fff" stroke-width="1.7"/><circle cx="7" cy="10.6" r="1.05" fill="#fff"/></svg>
<span class="t" style="left:1038.5px;top:211px;font-size:12.6px;color:#111">Learn more about:</span>
<span class="t" style="left:1144.5px;top:211px;font-size:12.3px;color:#1a1ae0">Levels</span>
<!-- group box -->
<div class="a" style="left:1016.5px;top:262.8px;width:283px;height:280px;border:1px solid #b0b0b0;box-shadow:inset 1px 1px 0 #f6f6f6"></div>
<div class="a" style="left:1031px;top:258px;width:171px;height:8px;background:#dfdfdf"></div>
<span class="t" style="left:1041px;top:259.8px;font-size:12px;color:#111">Channel:</span>
<div class="a" style="left:1094px;top:256.5px;width:105px;height:23px;border:1px solid #b4b4b4;background:linear-gradient(#f6f6f6,#e4e4e4)"></div>
<span class="t" style="left:1104.5px;top:262.8px;font-size:11.6px;letter-spacing:-0.6px;color:#111">RGB</span>
<svg width="12" height="8" style="left:1182px;top:266px"><path d="M0 0 L11 0 L5.5 6 Z" fill="#555"/></svg>
<span class="t" style="left:1026px;top:293.5px;font-size:12.5px;color:#111">Input Levels:</span>
<!-- histogram -->
<div class="a" style="left:1029px;top:311px;width:261px;height:104px;border:1px solid #a9a9a9;background:#e2e2e2"></div>
<svg width="261" height="104" style="left:1029px;top:311px">
 <path d="M2 101.5 L2 4 L3 4 L3 70 L4 70 L4 4 L24 4 L25 20 L26 33 L27 47 L28 58 L29 68 L30 79 L31 86 L33 93 L35 97 L38 99.5 L44 100.5 L255 100.5 L255 102 L2 102 Z" fill="#222"/>
 <rect x="2" y="100.5" width="253" height="1.5" fill="#222"/>
</svg>
<svg width="260" height="14" style="left:1025px;top:414px">
 <path d="M6.8 1 L11.5 7.5 Q12.3 9 11.2 11 Q10.5 12.3 9 12.3 L4.6 12.3 Q3.1 12.3 2.4 11 Q1.3 9 2.1 7.5 Z" fill="#575757"/>
 <path d="M117 1 L121.7 7.5 Q122.5 9 121.4 11 Q120.7 12.3 119.2 12.3 L114.8 12.3 Q113.3 12.3 112.6 11 Q111.5 9 112.3 7.5 Z" fill="#9a9a9a" stroke="#8a8a8a" stroke-width="0.6"/>
</svg>
<svg width="14" height="14" style="left:1278px;top:414px">
 <path d="M7 1 L11.7 7.5 Q12.5 9 11.4 11 Q10.7 12.3 9.2 12.3 L4.8 12.3 Q3.3 12.3 2.6 11 Q1.5 9 2.3 7.5 Z" fill="#fdfdfd" stroke="#909090" stroke-width="0.8"/>
</svg>
<span class="t" style="left:1035.5px;top:436.8px;font-size:12px;color:#111">0</span>
<div class="a" style="left:1140px;top:432px;width:39px;height:21px;border:1px solid #1a1a1a;background:#fff"></div>
<span class="t" style="left:1146.5px;top:436.8px;font-size:12px;color:#111">1.20</span>
<div class="a" style="left:1171px;top:435px;width:1px;height:14px;background:#111"></div>
<span class="t" style="left:1257px;top:436.8px;font-size:12.4px;color:#111">255</span>
<span class="t" style="left:1026px;top:465.5px;font-size:12.5px;color:#111">Output Levels:</span>
<div class="a" style="left:1030px;top:483px;width:258px;height:13px;border:1px solid #c8c8c8;background:linear-gradient(90deg,#000,#fff)"></div>
<svg width="260" height="14" style="left:1025px;top:495px">
 <path d="M6.8 1 L11.5 7.5 Q12.3 9 11.2 11 Q10.5 12.3 9 12.3 L4.6 12.3 Q3.1 12.3 2.4 11 Q1.3 9 2.1 7.5 Z" fill="#575757"/>
</svg>
<svg width="14" height="14" style="left:1278px;top:495px">
 <path d="M7 1 L11.7 7.5 Q12.5 9 11.4 11 Q10.7 12.3 9.2 12.3 L4.8 12.3 Q3.3 12.3 2.6 11 Q1.5 9 2.3 7.5 Z" fill="#fdfdfd" stroke="#909090" stroke-width="0.8"/>
</svg>
<span class="t" style="left:1035.5px;top:518.2px;font-size:12px;color:#111">0</span>
<span class="t" style="left:1257px;top:518.2px;font-size:12.4px;color:#111">255</span>
<!-- buttons -->
<div class="a" style="left:1317px;top:209px;width:96px;height:23px;border:1px solid #a4a4a4;background:linear-gradient(#f7f7f7,#e6e6e6 50%,#dadada)"></div>
<span class="t" style="left:1317px;width:96px;text-align:center;top:214.5px;font-size:12px;color:#111">OK</span>
<div class="a" style="left:1317px;top:241px;width:96px;height:23px;border:1px solid #a4a4a4;background:linear-gradient(#f7f7f7,#e6e6e6 50%,#dadada)"></div>
<span class="t" style="left:1317px;width:96px;text-align:center;top:246.5px;font-size:12.2px;color:#111">Cancel</span>
<div class="a" style="left:1317px;top:280px;width:96px;height:23px;border:1px solid #a4a4a4;background:linear-gradient(#f7f7f7,#e6e6e6 50%,#dadada)"></div>
<span class="t" style="left:1317px;width:96px;text-align:center;top:285.8px;font-size:12.2px;color:#111"><u>R</u>eset</span>
<div class="a" style="left:1317px;top:319px;width:96px;height:23px;border:1px solid #a4a4a4;background:linear-gradient(#f7f7f7,#e6e6e6 50%,#dadada)"></div>
<span class="t" style="left:1317px;width:96px;text-align:center;top:324.5px;font-size:12.2px;color:#111"><u>A</u>uto</span>
<!-- eyedroppers -->
<svg width="100" height="26" style="left:1318px;top:361px">
 <g transform="translate(18.8 8.8) rotate(-43)">
  <path d="M-19 0 Q-19 -1.7 -17 -1.9 L0 -2.4 L0 2.4 L-17 1.9 Q-19 1.7 -19 0 Z" fill="#fafafa" stroke="#222" stroke-width="0.9"/>
  <path d="M-18.5 0 Q-18.5 -1.3 -17 -1.5 L-7 -1.9 L-7 1.9 L-17 1.5 Q-18.5 1.3 -18.5 0 Z" fill="#222"/>
  <rect x="-2" y="-4.3" width="3.4" height="8.6" fill="#c8506a"/>
  <rect x="0.8" y="-2.9" width="8.2" height="5.8" rx="2.7" fill="#c8506a"/>
 </g>
 <g transform="translate(50.8 8.8) rotate(-43)">
  <path d="M-19 0 Q-19 -1.7 -17 -1.9 L0 -2.4 L0 2.4 L-17 1.9 Q-19 1.7 -19 0 Z" fill="#fafafa" stroke="#222" stroke-width="0.9"/>
  <path d="M-18.5 0 Q-18.5 -1.3 -17 -1.5 L-7 -1.9 L-7 1.9 L-17 1.5 Q-18.5 1.3 -18.5 0 Z" fill="#8a8a8a"/>
  <rect x="-2" y="-4.3" width="3.4" height="8.6" fill="#c8506a"/>
  <rect x="0.8" y="-2.9" width="8.2" height="5.8" rx="2.7" fill="#c8506a"/>
 </g>
 <g transform="translate(82.8 8.8) rotate(-43)">
  <path d="M-19 0 Q-19 -1.7 -17 -1.9 L0 -2.4 L0 2.4 L-17 1.9 Q-19 1.7 -19 0 Z" fill="#fafafa" stroke="#222" stroke-width="0.9"/>
  <path d="M-18.5 0 Q-18.5 -1.3 -17 -1.5 L-7 -1.9 L-7 1.9 L-17 1.5 Q-18.5 1.3 -18.5 0 Z" fill="#fff"/>
  <rect x="-2" y="-4.3" width="3.4" height="8.6" fill="#c8506a"/>
  <rect x="0.8" y="-2.9" width="8.2" height="5.8" rx="2.7" fill="#c8506a"/>
 </g>
</svg>
<!-- preview -->
<div class="a" style="left:1317px;top:407px;width:13px;height:13px;border:1px solid #777;background:#b8b8b8"></div>
<svg width="13" height="13" style="left:1317px;top:406px"><path d="M2.5 6.5 L5.3 9.5 L11 2" fill="none" stroke="#222" stroke-width="1.8"/></svg>
<span class="t" style="left:1335px;top:408.2px;font-size:12px;color:#111"><u>P</u>review</span>
</body></html>
